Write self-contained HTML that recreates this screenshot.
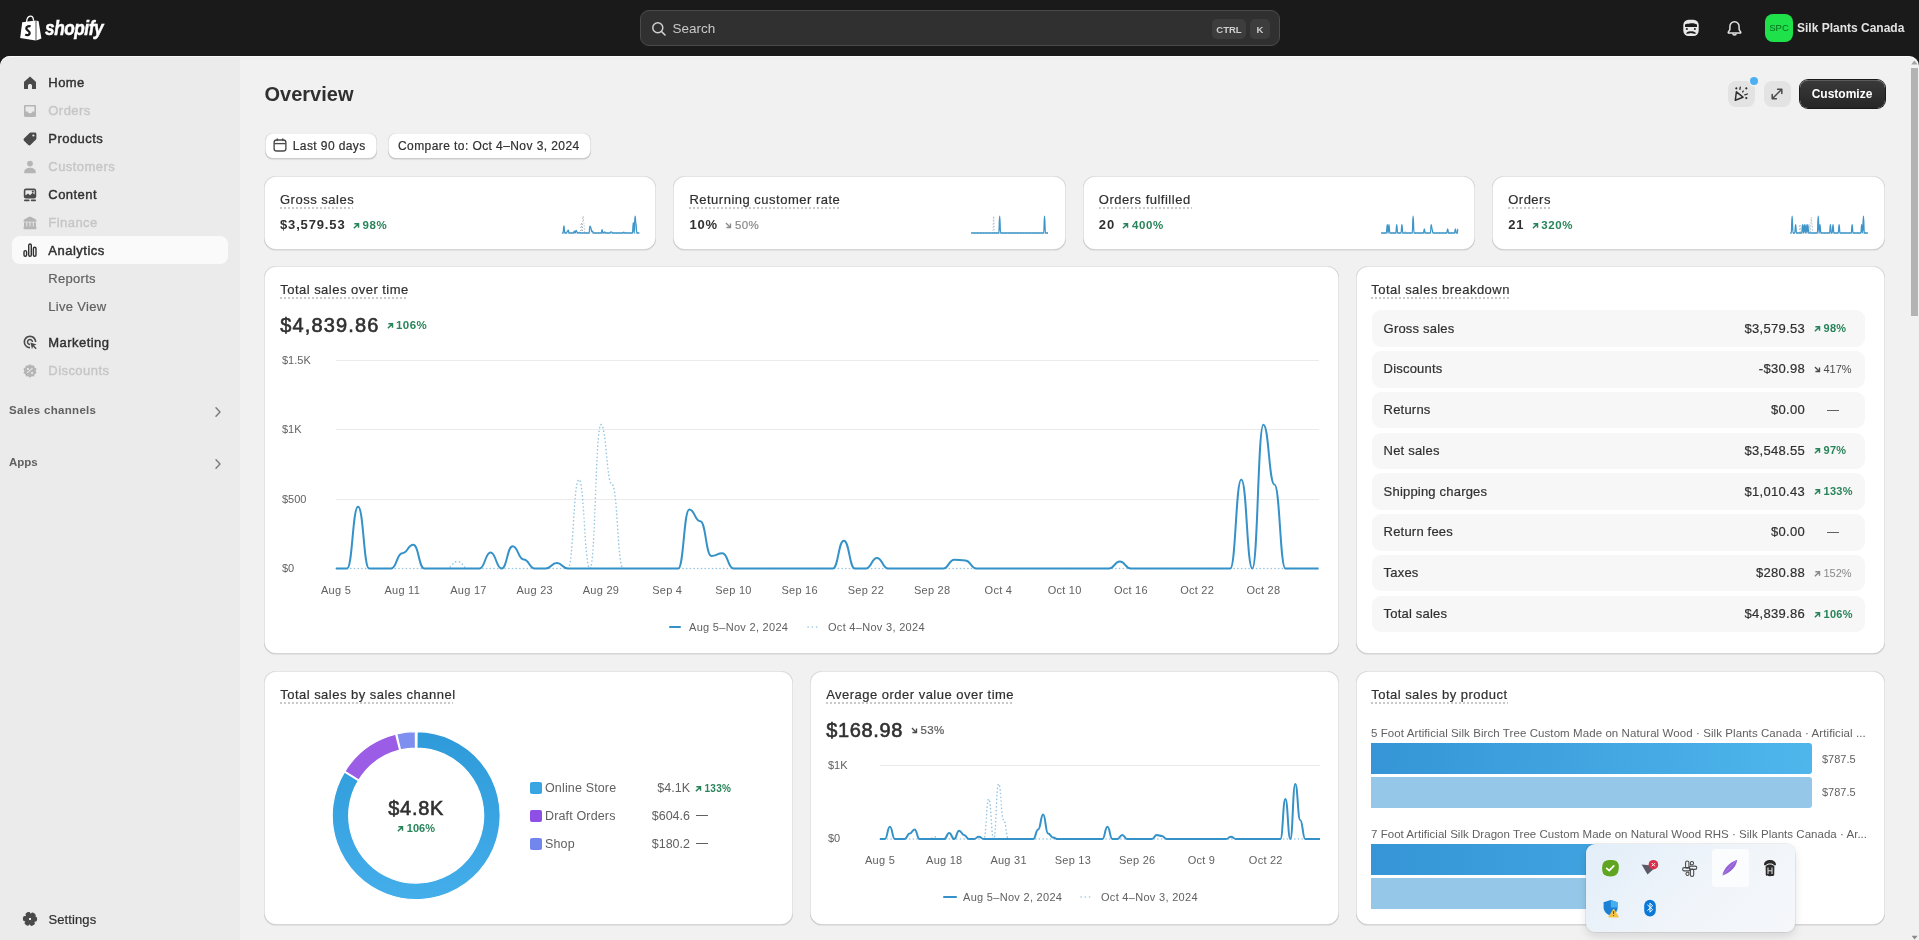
<!DOCTYPE html><html><head><meta charset="utf-8"><style>
*{margin:0;padding:0;box-sizing:border-box;}
html,body{width:1919px;height:940px;overflow:hidden;background:#1a1a1a;font-family:"Liberation Sans",sans-serif;-webkit-font-smoothing:antialiased;}
.md{-webkit-text-stroke:0.2px currentColor;}
.dots{position:absolute;height:1.5px;background:repeating-linear-gradient(90deg,#c9c9c9 0 2px,transparent 2px 4px);}
</style></head><body><div id="root" style="position:absolute;left:0;top:0;width:1919px;height:940px;overflow:hidden;will-change:transform;">
<div style="position:absolute;left:0.00px;top:0.00px;width:1919.00px;height:56.00px;background:#1a1a1a;"></div>
<svg style="position:absolute;left:19px;top:15px" width="24" height="26" viewBox="0 0 24 26">
<path d="M3.2 7.2 L16.6 5.4 L16.6 25.6 L1.2 23 Z" fill="#fff"/>
<path d="M17.4 5.6 L19.6 6.2 L22.4 23.6 L17.4 25.6 Z" fill="#fff"/>
<path d="M7.6 7 C7.8 3.6 9.4 1.4 11.4 1.2 C13.4 1.1 14.4 2.8 14.6 5.8" fill="none" stroke="#fff" stroke-width="1.3"/>
<path d="M11.6 11.6 C10.4 10.9 7.2 11 7.3 13.4 C7.4 15.6 10.9 15.7 10.7 18.2 C10.5 20.4 7.9 20.6 6.3 19.4" fill="none" stroke="#1a1a1a" stroke-width="2.3"/>
</svg>
<div style="position:absolute;left:44.50px;top:18.07px;font-size:20px;line-height:1;white-space:nowrap;color:#fff;font-weight:700;font-style:italic;transform:scaleX(0.86);transform-origin:0 0;letter-spacing:-0.5px;-webkit-text-stroke:0.5px #fff;">shopify</div>
<div style="position:absolute;left:640.00px;top:10.00px;width:640.00px;height:36.00px;background:#303030;border:1px solid #4a4a4a;border-radius:9px;box-sizing:border-box;"></div>
<svg style="position:absolute;left:651px;top:21px" width="16" height="16" viewBox="0 0 16 16"><circle cx="6.8" cy="6.8" r="5" fill="none" stroke="#d0d0d0" stroke-width="1.5"/><path d="M10.5 10.5 L14 14" stroke="#d0d0d0" stroke-width="1.6" stroke-linecap="round"/></svg>
<div style="position:absolute;left:672.50px;top:21.57px;font-size:13.5px;line-height:1;white-space:nowrap;color:#c8c8c8;">Search</div>
<div style="position:absolute;left:1212.00px;top:19.00px;width:34.00px;height:20.00px;background:#3d3d3d;border-radius:5px;"></div>
<div style="position:absolute;left:1250.00px;top:19.00px;width:20.00px;height:20.00px;background:#3d3d3d;border-radius:5px;"></div>
<div style="position:absolute;left:1212.00px;width:34px;text-align:center;top:24.66px;font-size:9.5px;line-height:1;white-space:nowrap;color:#cfcfcf;font-weight:700;">CTRL</div>
<div style="position:absolute;left:1250.00px;width:20px;text-align:center;top:24.66px;font-size:9.5px;line-height:1;white-space:nowrap;color:#cfcfcf;font-weight:700;">K</div>
<svg style="position:absolute;left:0;top:0" width="1919" height="56">
<rect x="1683.3" y="19.8" width="15.4" height="16.2" rx="5.2" fill="#e8e8e8"/>
<path d="M1685 24.6 C1686.5 23.4 1688 24.2 1689.6 23.6 C1691.4 22.9 1694 23 1697 24.4 L1697 27 C1693 26.6 1689.5 27.4 1685 27 Z" fill="#1a1a1a"/>
<circle cx="1686.9" cy="29" r="1" fill="#1a1a1a"/><circle cx="1694.9" cy="29" r="1" fill="#1a1a1a"/>
<path d="M1685.8 33.6 C1687.5 31.4 1689.5 30.8 1691 31.4 C1692.5 30.8 1694.5 31.4 1696.4 33.6 C1694.5 33.9 1692.5 33.5 1691 33.1 C1689.5 33.5 1687.5 33.9 1685.8 33.6 Z" fill="#1a1a1a"/>
</svg>
<svg style="position:absolute;left:1726px;top:20px" width="17" height="17" viewBox="0 0 17 17">
<path d="M8.5 1.8 C5.6 1.8 3.9 4 3.9 6.8 L3.9 9.6 L2.3 12.2 C2.1 12.6 2.3 13 2.8 13 L14.2 13 C14.7 13 14.9 12.6 14.7 12.2 L13.1 9.6 L13.1 6.8 C13.1 4 11.4 1.8 8.5 1.8 Z" fill="none" stroke="#e3e3e3" stroke-width="1.5" stroke-linejoin="round"/>
<path d="M6.8 13.6 C6.8 15.6 10.2 15.6 10.2 13.6" fill="none" stroke="#e3e3e3" stroke-width="1.5"/>
</svg>
<div style="position:absolute;left:1765.00px;top:14.00px;width:28.00px;height:28.00px;background:#1fe24b;border-radius:8px;"></div>
<div style="position:absolute;left:1765.00px;width:28px;text-align:center;top:23.46px;font-size:9.5px;line-height:1;white-space:nowrap;color:#0a6b1f;">SPC</div>
<div style="position:absolute;left:1797.00px;top:22.04px;font-size:12px;line-height:1;white-space:nowrap;color:#e3e3e3;font-weight:700;">Silk Plants Canada</div>
<div style="position:absolute;left:0.00px;top:56.00px;width:1919.00px;height:884.00px;background:#f1f1f1;border-radius:10px 10px 0 0;overflow:hidden;"><div style="position:absolute;left:0;top:0;width:240px;height:884px;background:#ebebeb;"></div><div style="position:absolute;left:0;top:0;width:1919px;height:884px;border-radius:10px 10px 0 0;box-shadow:inset 0 1px 0 rgba(255,255,255,0.7);"></div></div>
<div style="position:absolute;left:12.00px;top:236.00px;width:216.00px;height:28.00px;background:#fafafa;border-radius:8px;"></div>
<svg style="position:absolute;left:22px;top:74.60000000000001px" width="16" height="16" viewBox="0 0 16 16" fill="#4a4a4a" stroke="#4a4a4a" stroke-width="0"><path d="M8 1.6 L13.6 6.4 C13.9 6.7 14 7 14 7.4 L14 13.4 C14 13.8 13.7 14 13.4 14 L10 14 L10 10.6 C10 9.7 9.1 9 8 9 C6.9 9 6 9.7 6 10.6 L6 14 L2.6 14 C2.3 14 2 13.8 2 13.4 L2 7.4 C2 7 2.1 6.7 2.4 6.4 Z"/></svg>
<div style="position:absolute;left:48.30px;top:76.20px;font-size:13px;line-height:1;white-space:nowrap;color:#303030;-webkit-text-stroke:0.4px #303030;letter-spacing:0.45px;">Home</div>
<svg style="position:absolute;left:22px;top:102.60000000000001px" width="16" height="16" viewBox="0 0 16 16" fill="#b5b5b5" stroke="#b5b5b5" stroke-width="0"><path d="M3.2 2 L12.8 2 C13.5 2 14 2.5 14 3.2 L14 12.8 C14 13.5 13.5 14 12.8 14 L3.2 14 C2.5 14 2 13.5 2 12.8 L2 3.2 C2 2.5 2.5 2 3.2 2 Z M3.6 3.6 L3.6 8.4 L5.6 8.4 C6 9.6 6.9 10.2 8 10.2 C9.1 10.2 10 9.6 10.4 8.4 L12.4 8.4 L12.4 3.6 Z" fill-rule="evenodd"/></svg>
<div style="position:absolute;left:48.30px;top:104.20px;font-size:13px;line-height:1;white-space:nowrap;color:#c6c6c6;-webkit-text-stroke:0.4px #c6c6c6;letter-spacing:0.45px;">Orders</div>
<svg style="position:absolute;left:22px;top:130.6px" width="16" height="16" viewBox="0 0 16 16" fill="#4a4a4a" stroke="#4a4a4a" stroke-width="0"><path d="M8.6 1.6 L13 1.6 C13.8 1.6 14.4 2.2 14.4 3 L14.4 7.4 C14.4 7.8 14.2 8.2 14 8.4 L8.4 14 C7.8 14.6 6.9 14.6 6.3 14 L2 9.7 C1.4 9.1 1.4 8.2 2 7.6 L7.6 2 C7.8 1.8 8.2 1.6 8.6 1.6 Z M11.4 3.4 A1.1 1.1 0 1 0 11.4 5.6 A1.1 1.1 0 1 0 11.4 3.4 Z" fill-rule="evenodd"/></svg>
<div style="position:absolute;left:48.30px;top:132.20px;font-size:13px;line-height:1;white-space:nowrap;color:#303030;-webkit-text-stroke:0.4px #303030;letter-spacing:0.45px;">Products</div>
<svg style="position:absolute;left:22px;top:158.6px" width="16" height="16" viewBox="0 0 16 16" fill="#b5b5b5" stroke="#b5b5b5" stroke-width="0"><circle cx="8" cy="4.6" r="2.9"/><path d="M2.2 13.2 C2.2 10.4 4.6 8.8 8 8.8 C11.4 8.8 13.8 10.4 13.8 13.2 C13.8 13.8 13.4 14.2 12.8 14.2 L3.2 14.2 C2.6 14.2 2.2 13.8 2.2 13.2 Z"/></svg>
<div style="position:absolute;left:48.30px;top:160.20px;font-size:13px;line-height:1;white-space:nowrap;color:#c6c6c6;-webkit-text-stroke:0.4px #c6c6c6;letter-spacing:0.45px;">Customers</div>
<svg style="position:absolute;left:22px;top:186.6px" width="16" height="16" viewBox="0 0 16 16" fill="#4a4a4a" stroke="#4a4a4a" stroke-width="0"><rect x="1.8" y="1.6" width="12.4" height="9.8" rx="2.2"/><path d="M3.4 3.2 L12.6 3.2 L12.6 7.4 L10.6 5.8 L8 8.2 L6 6.4 L3.4 8.4 Z" fill="#ebebeb"/><circle cx="10.8" cy="4.6" r="1.05"/><rect x="2" y="12.6" width="5.6" height="1.6" rx=".8"/><rect x="8.8" y="12.6" width="5.2" height="1.6" rx=".8"/></svg>
<div style="position:absolute;left:48.30px;top:188.20px;font-size:13px;line-height:1;white-space:nowrap;color:#303030;-webkit-text-stroke:0.4px #303030;letter-spacing:0.45px;">Content</div>
<svg style="position:absolute;left:22px;top:214.6px" width="16" height="16" viewBox="0 0 16 16" fill="#b5b5b5" stroke="#b5b5b5" stroke-width="0"><path d="M8 1.4 C10.5 2.4 12.8 3.6 14.4 5 L14.4 6.8 L1.6 6.8 L1.6 5 C3.2 3.6 5.5 2.4 8 1.4 Z"/><rect x="2" y="7.4" width="2.3" height="4.2"/><rect x="5.2" y="7.4" width="2.3" height="4.2"/><rect x="8.5" y="7.4" width="2.3" height="4.2"/><rect x="11.7" y="7.4" width="2.3" height="4.2"/><rect x="1.6" y="11.2" width="12.8" height="3" rx=".8"/></svg>
<div style="position:absolute;left:48.30px;top:216.20px;font-size:13px;line-height:1;white-space:nowrap;color:#c6c6c6;-webkit-text-stroke:0.4px #c6c6c6;letter-spacing:0.45px;">Finance</div>
<svg style="position:absolute;left:22px;top:242.4px" width="16" height="16" viewBox="0 0 16 16" fill="#303030" stroke="#303030" stroke-width="0"><g fill="none" stroke-width="1.4"><rect x="2" y="8.6" width="2.6" height="5.6" rx="1.3"/><rect x="6.7" y="2" width="2.6" height="12.2" rx="1.3"/><rect x="11.4" y="5.2" width="2.6" height="9" rx="1.3"/></g></svg>
<div style="position:absolute;left:48.30px;top:244.20px;font-size:13px;line-height:1;white-space:nowrap;color:#303030;-webkit-text-stroke:0.45px #303030;letter-spacing:0.5px;">Analytics</div>
<div class="md" style="position:absolute;left:48.30px;top:272.20px;font-size:13px;line-height:1;white-space:nowrap;color:#616161;letter-spacing:0.3px;">Reports</div>
<div class="md" style="position:absolute;left:48.30px;top:300.20px;font-size:13px;line-height:1;white-space:nowrap;color:#616161;letter-spacing:0.3px;">Live View</div>
<svg style="position:absolute;left:22px;top:334px" width="16" height="16" viewBox="0 0 16 16" fill="#4a4a4a" stroke="#4a4a4a" stroke-width="0"><path d="M8 1.6 C11.5 1.6 14.4 4.4 14.4 8 L12.8 8 C12.8 5.3 10.7 3.2 8 3.2 C5.3 3.2 3.2 5.3 3.2 8 C3.2 10.7 5.3 12.8 8 12.8 L8 14.4 C4.5 14.4 1.6 11.5 1.6 8 C1.6 4.4 4.5 1.6 8 1.6 Z"/><path d="M8 4.8 C9.8 4.8 11.2 6.2 11.2 8 L9.7 8 C9.7 7 9 6.3 8 6.3 C7 6.3 6.3 7 6.3 8 C6.3 9 7 9.7 8 9.7 L8 11.2 C6.2 11.2 4.8 9.8 4.8 8 C4.8 6.2 6.2 4.8 8 4.8 Z"/><path d="M8.4 8.4 L14.6 10.6 L12 11.6 L14.6 14.2 L13.6 15.2 L11 12.6 L10 15.2 Z"/></svg>
<div style="position:absolute;left:48.30px;top:336.20px;font-size:13px;line-height:1;white-space:nowrap;color:#303030;-webkit-text-stroke:0.4px #303030;letter-spacing:0.45px;">Marketing</div>
<svg style="position:absolute;left:22px;top:363px" width="16" height="16" viewBox="0 0 16 16" fill="#b5b5b5" stroke="#b5b5b5" stroke-width="0"><path d="M8 1.2 L9.8 2.6 L12.1 2.4 L12.6 4.6 L14.6 5.8 L13.7 7.9 L14.6 10 L12.6 11.3 L12.1 13.5 L9.8 13.3 L8 14.8 L6.2 13.3 L3.9 13.5 L3.4 11.3 L1.4 10 L2.3 7.9 L1.4 5.8 L3.4 4.6 L3.9 2.4 L6.2 2.6 Z M5.4 10.2 L10.8 5.4 L10.2 4.8 L4.8 9.6 Z M5.9 4.9 A1.1 1.1 0 1 0 5.9 7.1 A1.1 1.1 0 1 0 5.9 4.9 Z M10.1 8.9 A1.1 1.1 0 1 0 10.1 11.1 A1.1 1.1 0 1 0 10.1 8.9 Z" fill-rule="evenodd"/></svg>
<div style="position:absolute;left:48.30px;top:364.20px;font-size:13px;line-height:1;white-space:nowrap;color:#c6c6c6;-webkit-text-stroke:0.4px #c6c6c6;letter-spacing:0.45px;">Discounts</div>
<div style="position:absolute;left:9.00px;top:404.87px;font-size:11.5px;line-height:1;white-space:nowrap;color:#616161;font-weight:700;letter-spacing:0.3px;">Sales channels</div>
<div style="position:absolute;left:9.00px;top:456.87px;font-size:11.5px;line-height:1;white-space:nowrap;color:#616161;font-weight:700;">Apps</div>
<svg style="position:absolute;left:213px;top:406px" width="10" height="12" viewBox="0 0 10 12"><path d="M3 1.8 L7 6 L3 10.2" fill="none" stroke="#7a7a7a" stroke-width="1.4" stroke-linecap="round" stroke-linejoin="round"/></svg>
<svg style="position:absolute;left:213px;top:458px" width="10" height="12" viewBox="0 0 10 12"><path d="M3 1.8 L7 6 L3 10.2" fill="none" stroke="#7a7a7a" stroke-width="1.4" stroke-linecap="round" stroke-linejoin="round"/></svg>
<svg style="position:absolute;left:22px;top:911px" width="16" height="16" viewBox="0 0 16 16" fill="#4a4a4a" stroke="#4a4a4a"><circle cx="8" cy="8" r="5"/><circle cx="8" cy="8" r="5.3" fill="none" stroke-width="3.6" stroke-dasharray="1.6 3.95" stroke-linecap="round" transform="rotate(-8 8 8)"/><circle cx="8" cy="8" r="1.7" fill="#ebebeb"/></svg>
<div class="md" style="position:absolute;left:48.50px;top:913.00px;font-size:13px;line-height:1;white-space:nowrap;color:#303030;letter-spacing:0.1px;">Settings</div>
<div style="position:absolute;left:264.50px;top:83.87px;font-size:20px;line-height:1;white-space:nowrap;color:#303030;font-weight:700;">Overview</div>
<div style="position:absolute;left:1727.50px;top:80.50px;width:27.00px;height:26.50px;background:#e3e3e3;border-radius:8px;"></div>
<svg style="position:absolute;left:0;top:0" width="1919" height="120">
<path d="M1736.4 91.8 L1743 97.2 L1735.3 100.2 Z" fill="none" stroke="#303030" stroke-width="1.5" stroke-linejoin="round"/>
<path d="M1736.3 86.9 L1737.6 88.3 L1736.3 89.7 L1735 88.3 Z" fill="#303030"/>
<path d="M1746.3 86.9 L1747.6 88.3 L1746.3 89.7 L1745 88.3 Z" fill="#303030"/>
<path d="M1740.3 87.2 L1739.9 89.3" stroke="#303030" stroke-width="1.3" stroke-linecap="round"/>
<path d="M1743.2 91 L1742.7 92" stroke="#303030" stroke-width="1.3" stroke-linecap="round"/>
<path d="M1744.8 94.8 L1747.4 94" stroke="#303030" stroke-width="1.3" stroke-linecap="round"/>
<circle cx="1746.3" cy="98.1" r="1.1" fill="#303030"/>
</svg>
<div style="position:absolute;left:1750.00px;top:77.00px;width:8.40px;height:8.40px;background:#4cb0f2;border-radius:50%;box-shadow:0 0 0 1.5px #f1f1f1;"></div>
<div style="position:absolute;left:1763.50px;top:80.50px;width:27.00px;height:26.50px;background:#e3e3e3;border-radius:8px;"></div>
<svg style="position:absolute;left:1769px;top:86px" width="16" height="16" viewBox="0 0 16 16">
<path d="M3.5 12.5 L12.5 3.5 M8.6 3.2 L12.8 3.2 L12.8 7.4 M3.2 8.6 L3.2 12.8 L7.4 12.8" fill="none" stroke="#4a4a4a" stroke-width="1.5" stroke-linecap="round" stroke-linejoin="round"/>
</svg>
<div style="position:absolute;left:1799.50px;top:80.00px;width:85.00px;height:27.50px;background:linear-gradient(#3a3a3a,#262626);border-radius:8px;box-shadow:0 0 0 1px #1a1a1a, inset 0 1px 0 rgba(255,255,255,0.18);"></div>
<div style="position:absolute;left:1802.00px;width:80px;text-align:center;top:88.04px;font-size:12px;line-height:1;white-space:nowrap;color:#fff;font-weight:700;">Customize</div>
<div style="position:absolute;left:264.50px;top:132.50px;width:112.50px;height:26.00px;background:#fff;border-radius:8px;box-shadow:inset 1px 0 0 rgba(0,0,0,.1),inset -1px 0 0 rgba(0,0,0,.1),inset 0 -1px 0 rgba(0,0,0,.2),inset 0 1px 0 rgba(0,0,0,.06),0 1px 1px rgba(0,0,0,.08);"></div>
<svg style="position:absolute;left:272px;top:137px" width="16" height="16" viewBox="0 0 16 16">
<rect x="2.1" y="3" width="11.8" height="11" rx="2.6" fill="none" stroke="#4a4a4a" stroke-width="1.35"/>
<path d="M2.3 6.6 L13.7 6.6" stroke="#4a4a4a" stroke-width="1.35"/>
<path d="M5.2 1.8 L5.2 3.6 M10.8 1.8 L10.8 3.6" stroke="#4a4a4a" stroke-width="1.35" stroke-linecap="round"/>
</svg>
<div class="md" style="position:absolute;left:292.80px;top:140.24px;font-size:12px;line-height:1;white-space:nowrap;color:#303030;letter-spacing:0.4px;">Last 90 days</div>
<div style="position:absolute;left:387.50px;top:132.50px;width:203.50px;height:26.00px;background:#fff;border-radius:8px;box-shadow:inset 1px 0 0 rgba(0,0,0,.1),inset -1px 0 0 rgba(0,0,0,.1),inset 0 -1px 0 rgba(0,0,0,.2),inset 0 1px 0 rgba(0,0,0,.06),0 1px 1px rgba(0,0,0,.08);"></div>
<div class="md" style="position:absolute;left:398.00px;top:140.24px;font-size:12px;line-height:1;white-space:nowrap;color:#303030;letter-spacing:0.42px;">Compare to: Oct 4–Nov 3, 2024</div>
<div style="position:absolute;left:264.00px;top:176.20px;width:392.40px;height:73.60px;background:#fff;border-radius:12px;box-shadow:inset 1px 0 0 rgba(0,0,0,.11),inset -1px 0 0 rgba(0,0,0,.11),inset 0 -1px 0 rgba(0,0,0,.16),inset 0 1px 0 rgba(204,204,204,.5),0 1px 0 rgba(26,26,26,.07);"></div>
<div class="md" style="position:absolute;left:280.00px;top:193.00px;font-size:13px;line-height:1;white-space:nowrap;color:#303030;letter-spacing:0.5px;">Gross sales</div>
<div class="dots" style="left:280.0px;top:207.3px;width:73px"></div>
<div style="position:absolute;left:280px;top:217.9955px;font-size:13px;line-height:1;white-space:nowrap;color:#303030;font-weight:700;letter-spacing:0.85px;">$3,579.53<span style="display:inline-block;width:7.5px"></span><span style="font-size:11.5px;color:#29845a;font-weight:700;letter-spacing:0.6px"><svg width="7" height="7" viewBox="0 0 8 8" style="display:inline-block;vertical-align:0px;margin-right:2.5px"><path d="M1.6 6.6 L6 2.2 M2.4 1.9 L6.3 1.9 L6.3 5.8" fill="none" stroke="#29845a" stroke-width="1.7" stroke-linecap="square"/></svg>98%</span></div>
<div style="position:absolute;left:673.40px;top:176.20px;width:392.40px;height:73.60px;background:#fff;border-radius:12px;box-shadow:inset 1px 0 0 rgba(0,0,0,.11),inset -1px 0 0 rgba(0,0,0,.11),inset 0 -1px 0 rgba(0,0,0,.16),inset 0 1px 0 rgba(204,204,204,.5),0 1px 0 rgba(26,26,26,.07);"></div>
<div class="md" style="position:absolute;left:689.40px;top:193.00px;font-size:13px;line-height:1;white-space:nowrap;color:#303030;letter-spacing:0.5px;">Returning customer rate</div>
<div class="dots" style="left:689.4px;top:207.3px;width:152px"></div>
<div style="position:absolute;left:689.4px;top:217.9955px;font-size:13px;line-height:1;white-space:nowrap;color:#303030;font-weight:700;letter-spacing:0.85px;">10%<span style="display:inline-block;width:7.5px"></span><span class="md" style="font-size:11.5px;color:#8a8a8a;font-weight:400;letter-spacing:0.4px"><svg width="7" height="7" viewBox="0 0 8 8" style="display:inline-block;vertical-align:0px;margin-right:2.5px"><path d="M1.6 1.6 L6 6 M6.3 2.4 L6.3 6.3 L2.4 6.3" fill="none" stroke="#8a8a8a" stroke-width="1.5" stroke-linecap="square"/></svg>50%</span></div>
<div style="position:absolute;left:1082.80px;top:176.20px;width:392.40px;height:73.60px;background:#fff;border-radius:12px;box-shadow:inset 1px 0 0 rgba(0,0,0,.11),inset -1px 0 0 rgba(0,0,0,.11),inset 0 -1px 0 rgba(0,0,0,.16),inset 0 1px 0 rgba(204,204,204,.5),0 1px 0 rgba(26,26,26,.07);"></div>
<div class="md" style="position:absolute;left:1098.80px;top:193.00px;font-size:13px;line-height:1;white-space:nowrap;color:#303030;letter-spacing:0.5px;">Orders fulfilled</div>
<div class="dots" style="left:1098.8px;top:207.3px;width:93px"></div>
<div style="position:absolute;left:1098.8px;top:217.9955px;font-size:13px;line-height:1;white-space:nowrap;color:#303030;font-weight:700;letter-spacing:0.85px;">20<span style="display:inline-block;width:7.5px"></span><span style="font-size:11.5px;color:#29845a;font-weight:700;letter-spacing:0.6px"><svg width="7" height="7" viewBox="0 0 8 8" style="display:inline-block;vertical-align:0px;margin-right:2.5px"><path d="M1.6 6.6 L6 2.2 M2.4 1.9 L6.3 1.9 L6.3 5.8" fill="none" stroke="#29845a" stroke-width="1.7" stroke-linecap="square"/></svg>400%</span></div>
<div style="position:absolute;left:1492.20px;top:176.20px;width:392.40px;height:73.60px;background:#fff;border-radius:12px;box-shadow:inset 1px 0 0 rgba(0,0,0,.11),inset -1px 0 0 rgba(0,0,0,.11),inset 0 -1px 0 rgba(0,0,0,.16),inset 0 1px 0 rgba(204,204,204,.5),0 1px 0 rgba(26,26,26,.07);"></div>
<div class="md" style="position:absolute;left:1508.20px;top:193.00px;font-size:13px;line-height:1;white-space:nowrap;color:#303030;letter-spacing:0.5px;">Orders</div>
<div class="dots" style="left:1508.2px;top:207.3px;width:43px"></div>
<div style="position:absolute;left:1508.2px;top:217.9955px;font-size:13px;line-height:1;white-space:nowrap;color:#303030;font-weight:700;letter-spacing:0.85px;">21<span style="display:inline-block;width:7.5px"></span><span style="font-size:11.5px;color:#29845a;font-weight:700;letter-spacing:0.6px"><svg width="7" height="7" viewBox="0 0 8 8" style="display:inline-block;vertical-align:0px;margin-right:2.5px"><path d="M1.6 6.6 L6 2.2 M2.4 1.9 L6.3 1.9 L6.3 5.8" fill="none" stroke="#29845a" stroke-width="1.7" stroke-linecap="square"/></svg>320%</span></div>
<div style="position:absolute;left:264.00px;top:266.30px;width:1074.70px;height:388.20px;background:#fff;border-radius:12px;box-shadow:inset 1px 0 0 rgba(0,0,0,.11),inset -1px 0 0 rgba(0,0,0,.11),inset 0 -1px 0 rgba(0,0,0,.16),inset 0 1px 0 rgba(204,204,204,.5),0 1px 0 rgba(26,26,26,.07);"></div>
<div class="md" style="position:absolute;left:280.20px;top:283.00px;font-size:13px;line-height:1;white-space:nowrap;color:#303030;letter-spacing:0.48px;">Total sales over time</div>
<div class="dots" style="left:280.2px;top:297.2px;width:128.0px"></div>
<div style="position:absolute;left:280.20px;top:315.07px;font-size:20px;line-height:1;white-space:nowrap;color:#303030;-webkit-text-stroke:0.6px #303030;letter-spacing:1.15px;">$4,839.86</div>
<div style="position:absolute;left:386.50px;top:320.47px;font-size:11.5px;line-height:1;white-space:nowrap;color:#29845a;font-weight:700;letter-spacing:0.45px;"><svg width="7" height="7" viewBox="0 0 8 8" style="display:inline-block;vertical-align:0px;margin-right:2.5px"><path d="M1.6 6.6 L6 2.2 M2.4 1.9 L6.3 1.9 L6.3 5.8" fill="none" stroke="#29845a" stroke-width="1.7" stroke-linecap="square"/></svg>106%</div>
<div style="position:absolute;left:336.00px;top:359.50px;width:983.00px;height:1.00px;background:#ebebeb;"></div>
<div style="position:absolute;left:282.00px;top:354.69px;font-size:11px;line-height:1;white-space:nowrap;color:#616161;">$1.5K</div>
<div style="position:absolute;left:336.00px;top:429.00px;width:983.00px;height:1.00px;background:#ebebeb;"></div>
<div style="position:absolute;left:282.00px;top:424.19px;font-size:11px;line-height:1;white-space:nowrap;color:#616161;">$1K</div>
<div style="position:absolute;left:336.00px;top:498.50px;width:983.00px;height:1.00px;background:#ebebeb;"></div>
<div style="position:absolute;left:282.00px;top:493.69px;font-size:11px;line-height:1;white-space:nowrap;color:#616161;">$500</div>
<div style="position:absolute;left:282.00px;top:563.19px;font-size:11px;line-height:1;white-space:nowrap;color:#616161;">$0</div>
<div style="position:absolute;left:306.00px;width:60px;text-align:center;top:584.69px;font-size:11px;line-height:1;white-space:nowrap;color:#616161;letter-spacing:0.25px;">Aug 5</div>
<div style="position:absolute;left:372.24px;width:60px;text-align:center;top:584.69px;font-size:11px;line-height:1;white-space:nowrap;color:#616161;letter-spacing:0.25px;">Aug 11</div>
<div style="position:absolute;left:438.48px;width:60px;text-align:center;top:584.69px;font-size:11px;line-height:1;white-space:nowrap;color:#616161;letter-spacing:0.25px;">Aug 17</div>
<div style="position:absolute;left:504.72px;width:60px;text-align:center;top:584.69px;font-size:11px;line-height:1;white-space:nowrap;color:#616161;letter-spacing:0.25px;">Aug 23</div>
<div style="position:absolute;left:570.96px;width:60px;text-align:center;top:584.69px;font-size:11px;line-height:1;white-space:nowrap;color:#616161;letter-spacing:0.25px;">Aug 29</div>
<div style="position:absolute;left:637.20px;width:60px;text-align:center;top:584.69px;font-size:11px;line-height:1;white-space:nowrap;color:#616161;letter-spacing:0.25px;">Sep 4</div>
<div style="position:absolute;left:703.44px;width:60px;text-align:center;top:584.69px;font-size:11px;line-height:1;white-space:nowrap;color:#616161;letter-spacing:0.25px;">Sep 10</div>
<div style="position:absolute;left:769.68px;width:60px;text-align:center;top:584.69px;font-size:11px;line-height:1;white-space:nowrap;color:#616161;letter-spacing:0.25px;">Sep 16</div>
<div style="position:absolute;left:835.92px;width:60px;text-align:center;top:584.69px;font-size:11px;line-height:1;white-space:nowrap;color:#616161;letter-spacing:0.25px;">Sep 22</div>
<div style="position:absolute;left:902.16px;width:60px;text-align:center;top:584.69px;font-size:11px;line-height:1;white-space:nowrap;color:#616161;letter-spacing:0.25px;">Sep 28</div>
<div style="position:absolute;left:968.40px;width:60px;text-align:center;top:584.69px;font-size:11px;line-height:1;white-space:nowrap;color:#616161;letter-spacing:0.25px;">Oct 4</div>
<div style="position:absolute;left:1034.64px;width:60px;text-align:center;top:584.69px;font-size:11px;line-height:1;white-space:nowrap;color:#616161;letter-spacing:0.25px;">Oct 10</div>
<div style="position:absolute;left:1100.88px;width:60px;text-align:center;top:584.69px;font-size:11px;line-height:1;white-space:nowrap;color:#616161;letter-spacing:0.25px;">Oct 16</div>
<div style="position:absolute;left:1167.12px;width:60px;text-align:center;top:584.69px;font-size:11px;line-height:1;white-space:nowrap;color:#616161;letter-spacing:0.25px;">Oct 22</div>
<div style="position:absolute;left:1233.36px;width:60px;text-align:center;top:584.69px;font-size:11px;line-height:1;white-space:nowrap;color:#616161;letter-spacing:0.25px;">Oct 28</div>
<svg style="position:absolute;left:0;top:0" width="1919" height="940"><path d="M336.00,568.50L347.04,568.50L358.08,568.50L369.12,568.50L380.16,568.50L391.20,568.50L402.24,568.50L413.28,568.50L424.32,568.50L435.36,568.50L446.40,568.50C451.92,568.50 451.92,561.55 457.44,561.55C462.97,561.55 462.97,568.50 468.49,568.50L479.53,568.50L490.57,568.50L501.61,568.50L512.65,568.50L523.69,568.50L534.73,568.50L545.77,568.50L556.81,568.50L567.85,568.50C573.37,568.50 573.37,479.54 578.89,479.54C584.41,479.54 584.41,568.50 589.93,568.50C595.45,568.50 595.45,424.63 600.97,424.63C606.49,424.63 606.49,484.40 612.01,484.40C617.53,484.40 617.53,568.50 623.05,568.50L634.09,568.50L645.13,568.50L656.17,568.50L667.21,568.50L678.25,568.50L689.29,568.50L700.33,568.50L711.38,568.50L722.42,568.50L733.46,568.50L744.50,568.50L755.54,568.50L766.58,568.50L777.62,568.50L788.66,568.50L799.70,568.50L810.74,568.50L821.78,568.50L832.82,568.50L843.86,568.50L854.90,568.50L865.94,568.50L876.98,568.50L888.02,568.50L899.06,568.50L910.10,568.50L921.14,568.50L932.18,568.50L943.22,568.50L954.27,568.50L965.31,568.50L976.35,568.50L987.39,568.50L998.43,568.50L1009.47,568.50L1020.51,568.50L1031.55,568.50L1042.59,568.50L1053.63,568.50L1064.67,568.50L1075.71,568.50L1086.75,568.50L1097.79,568.50L1108.83,568.50L1119.87,568.50L1130.91,568.50L1141.95,568.50L1152.99,568.50L1164.03,568.50L1175.07,568.50L1186.11,568.50L1197.16,568.50L1208.20,568.50L1219.24,568.50L1230.28,568.50L1241.32,568.50L1252.36,568.50L1263.40,568.50L1274.44,568.50L1285.48,568.50L1296.52,568.50L1307.56,568.50L1318.60,568.50" fill="none" stroke="#96c6e3" stroke-width="1.6" stroke-dasharray="0.1 3.6" stroke-linecap="round"/><path d="M336.00,568.50L347.04,568.50C352.56,568.50 352.56,506.64 358.08,506.64C363.60,506.64 363.60,568.50 369.12,568.50L380.16,568.50L391.20,568.50C396.72,568.50 396.72,553.21 402.24,553.21C407.76,553.21 407.76,544.87 413.28,544.87C418.80,544.87 418.80,568.50 424.32,568.50L435.36,568.50L446.40,568.50L457.44,568.50L468.49,568.50L479.53,568.50C485.05,568.50 485.05,552.51 490.57,552.51C496.09,552.51 496.09,568.50 501.61,568.50C507.13,568.50 507.13,546.26 512.65,546.26C518.17,546.26 518.17,559.47 523.69,559.47C529.21,559.47 529.21,568.50 534.73,568.50L545.77,568.50C551.29,568.50 551.29,562.94 556.81,562.94C562.33,562.94 562.33,568.50 567.85,568.50L578.89,568.50L589.93,568.50L600.97,568.50L612.01,568.50L623.05,568.50L634.09,568.50L645.13,568.50L656.17,568.50L667.21,568.50L678.25,568.50C683.77,568.50 683.77,509.43 689.29,509.43C694.81,509.43 694.81,521.24 700.33,521.24C705.86,521.24 705.86,555.99 711.38,555.99C716.90,555.99 716.90,553.21 722.42,553.21C727.94,553.21 727.94,568.50 733.46,568.50L744.50,568.50L755.54,568.50L766.58,568.50L777.62,568.50L788.66,568.50L799.70,568.50L810.74,568.50L821.78,568.50L832.82,568.50C838.34,568.50 838.34,540.70 843.86,540.70C849.38,540.70 849.38,568.50 854.90,568.50L865.94,568.50C871.46,568.50 871.46,558.08 876.98,558.08C882.50,558.08 882.50,568.50 888.02,568.50L899.06,568.50L910.10,568.50L921.14,568.50L932.18,568.50L943.22,568.50C948.74,568.50 948.74,559.74 954.27,559.74C959.79,559.74 959.79,560.44 965.31,560.44C970.83,560.44 970.83,568.50 976.35,568.50L987.39,568.50L998.43,568.50L1009.47,568.50L1020.51,568.50L1031.55,568.50L1042.59,568.50L1053.63,568.50L1064.67,568.50L1075.71,568.50L1086.75,568.50L1097.79,568.50L1108.83,568.50C1114.35,568.50 1114.35,561.55 1119.87,561.55C1125.39,561.55 1125.39,568.50 1130.91,568.50L1141.95,568.50L1152.99,568.50L1164.03,568.50L1175.07,568.50L1186.11,568.50L1197.16,568.50L1208.20,568.50L1219.24,568.50L1230.28,568.50C1235.80,568.50 1235.80,479.54 1241.32,479.54C1246.84,479.54 1246.84,568.50 1252.36,568.50C1257.88,568.50 1257.88,424.63 1263.40,424.63C1268.92,424.63 1268.92,484.40 1274.44,484.40C1279.96,484.40 1279.96,568.50 1285.48,568.50L1296.52,568.50L1307.56,568.50L1318.60,568.50" fill="none" stroke="#3592c8" stroke-width="2" stroke-linejoin="round"/></svg>
<div style="position:absolute;left:669.00px;top:626.00px;width:12.00px;height:2.00px;background:#3592c8;border-radius:1px;"></div>
<div style="position:absolute;left:689.00px;top:621.69px;font-size:11px;line-height:1;white-space:nowrap;color:#616161;letter-spacing:0.3px;">Aug 5–Nov 2, 2024</div>
<svg style="position:absolute;left:806px;top:624px" width="16" height="6"><path d="M2 3 L14 3" stroke="#96c6e3" stroke-width="1.6" stroke-dasharray="0.1 4.2" stroke-linecap="round"/></svg>
<div style="position:absolute;left:828.00px;top:621.69px;font-size:11px;line-height:1;white-space:nowrap;color:#616161;letter-spacing:0.3px;">Oct 4–Nov 3, 2024</div>
<div style="position:absolute;left:1355.70px;top:266.30px;width:528.90px;height:388.20px;background:#fff;border-radius:12px;box-shadow:inset 1px 0 0 rgba(0,0,0,.11),inset -1px 0 0 rgba(0,0,0,.11),inset 0 -1px 0 rgba(0,0,0,.16),inset 0 1px 0 rgba(204,204,204,.5),0 1px 0 rgba(26,26,26,.07);"></div>
<div class="md" style="position:absolute;left:1371.20px;top:283.00px;font-size:13px;line-height:1;white-space:nowrap;color:#303030;letter-spacing:0.48px;">Total sales breakdown</div>
<div class="dots" style="left:1371.2px;top:297.2px;width:139.0px"></div>
<div style="position:absolute;left:1371.50px;top:310.30px;width:493.50px;height:36.50px;background:#f7f7f7;border-radius:9px;"></div>
<div class="md" style="position:absolute;left:1383.60px;top:321.50px;font-size:13px;line-height:1;white-space:nowrap;color:#303030;letter-spacing:0.2px;">Gross sales</div>
<div class="md" style="position:absolute;left:1655.00px;width:150px;text-align:right;top:321.50px;font-size:13px;line-height:1;white-space:nowrap;color:#303030;letter-spacing:0.3px;">$3,579.53</div>
<div style="position:absolute;left:1814.00px;top:323.19px;font-size:11px;line-height:1;white-space:nowrap;color:#29845a;font-weight:700;letter-spacing:0.3px;"><svg width="7" height="7" viewBox="0 0 8 8" style="display:inline-block;vertical-align:0px;margin-right:2.5px"><path d="M1.6 6.6 L6 2.2 M2.4 1.9 L6.3 1.9 L6.3 5.8" fill="none" stroke="#29845a" stroke-width="1.7" stroke-linecap="square"/></svg>98%</div>
<div style="position:absolute;left:1371.50px;top:351.06px;width:493.50px;height:36.50px;background:#f7f7f7;border-radius:9px;"></div>
<div class="md" style="position:absolute;left:1383.60px;top:362.26px;font-size:13px;line-height:1;white-space:nowrap;color:#303030;letter-spacing:0.2px;">Discounts</div>
<div class="md" style="position:absolute;left:1655.00px;width:150px;text-align:right;top:362.26px;font-size:13px;line-height:1;white-space:nowrap;color:#303030;letter-spacing:0.3px;">-$30.98</div>
<div style="position:absolute;left:1814.00px;top:363.95px;font-size:11px;line-height:1;white-space:nowrap;color:#4a4a4a;"><svg width="7" height="7" viewBox="0 0 8 8" style="display:inline-block;vertical-align:0px;margin-right:2.5px"><path d="M1.6 1.6 L6 6 M6.3 2.4 L6.3 6.3 L2.4 6.3" fill="none" stroke="#4a4a4a" stroke-width="1.5" stroke-linecap="square"/></svg>417%</div>
<div style="position:absolute;left:1371.50px;top:391.82px;width:493.50px;height:36.50px;background:#f7f7f7;border-radius:9px;"></div>
<div class="md" style="position:absolute;left:1383.60px;top:403.02px;font-size:13px;line-height:1;white-space:nowrap;color:#303030;letter-spacing:0.2px;">Returns</div>
<div class="md" style="position:absolute;left:1655.00px;width:150px;text-align:right;top:403.02px;font-size:13px;line-height:1;white-space:nowrap;color:#303030;letter-spacing:0.3px;">$0.00</div>
<div style="position:absolute;left:1827.00px;top:409.52px;width:12.00px;height:1.20px;background:#616161;"></div>
<div style="position:absolute;left:1371.50px;top:432.58px;width:493.50px;height:36.50px;background:#f7f7f7;border-radius:9px;"></div>
<div class="md" style="position:absolute;left:1383.60px;top:443.78px;font-size:13px;line-height:1;white-space:nowrap;color:#303030;letter-spacing:0.2px;">Net sales</div>
<div class="md" style="position:absolute;left:1655.00px;width:150px;text-align:right;top:443.78px;font-size:13px;line-height:1;white-space:nowrap;color:#303030;letter-spacing:0.3px;">$3,548.55</div>
<div style="position:absolute;left:1814.00px;top:445.47px;font-size:11px;line-height:1;white-space:nowrap;color:#29845a;font-weight:700;letter-spacing:0.3px;"><svg width="7" height="7" viewBox="0 0 8 8" style="display:inline-block;vertical-align:0px;margin-right:2.5px"><path d="M1.6 6.6 L6 2.2 M2.4 1.9 L6.3 1.9 L6.3 5.8" fill="none" stroke="#29845a" stroke-width="1.7" stroke-linecap="square"/></svg>97%</div>
<div style="position:absolute;left:1371.50px;top:473.34px;width:493.50px;height:36.50px;background:#f7f7f7;border-radius:9px;"></div>
<div class="md" style="position:absolute;left:1383.60px;top:484.54px;font-size:13px;line-height:1;white-space:nowrap;color:#303030;letter-spacing:0.2px;">Shipping charges</div>
<div class="md" style="position:absolute;left:1655.00px;width:150px;text-align:right;top:484.54px;font-size:13px;line-height:1;white-space:nowrap;color:#303030;letter-spacing:0.3px;">$1,010.43</div>
<div style="position:absolute;left:1814.00px;top:486.23px;font-size:11px;line-height:1;white-space:nowrap;color:#29845a;font-weight:700;letter-spacing:0.3px;"><svg width="7" height="7" viewBox="0 0 8 8" style="display:inline-block;vertical-align:0px;margin-right:2.5px"><path d="M1.6 6.6 L6 2.2 M2.4 1.9 L6.3 1.9 L6.3 5.8" fill="none" stroke="#29845a" stroke-width="1.7" stroke-linecap="square"/></svg>133%</div>
<div style="position:absolute;left:1371.50px;top:514.10px;width:493.50px;height:36.50px;background:#f7f7f7;border-radius:9px;"></div>
<div class="md" style="position:absolute;left:1383.60px;top:525.30px;font-size:13px;line-height:1;white-space:nowrap;color:#303030;letter-spacing:0.2px;">Return fees</div>
<div class="md" style="position:absolute;left:1655.00px;width:150px;text-align:right;top:525.30px;font-size:13px;line-height:1;white-space:nowrap;color:#303030;letter-spacing:0.3px;">$0.00</div>
<div style="position:absolute;left:1827.00px;top:531.80px;width:12.00px;height:1.20px;background:#616161;"></div>
<div style="position:absolute;left:1371.50px;top:554.86px;width:493.50px;height:36.50px;background:#f7f7f7;border-radius:9px;"></div>
<div class="md" style="position:absolute;left:1383.60px;top:566.06px;font-size:13px;line-height:1;white-space:nowrap;color:#303030;letter-spacing:0.2px;">Taxes</div>
<div class="md" style="position:absolute;left:1655.00px;width:150px;text-align:right;top:566.06px;font-size:13px;line-height:1;white-space:nowrap;color:#303030;letter-spacing:0.3px;">$280.88</div>
<div style="position:absolute;left:1814.00px;top:567.75px;font-size:11px;line-height:1;white-space:nowrap;color:#8a8a8a;"><svg width="7" height="7" viewBox="0 0 8 8" style="display:inline-block;vertical-align:0px;margin-right:2.5px"><path d="M1.6 6.6 L6 2.2 M2.4 1.9 L6.3 1.9 L6.3 5.8" fill="none" stroke="#8a8a8a" stroke-width="1.7" stroke-linecap="square"/></svg>152%</div>
<div style="position:absolute;left:1371.50px;top:595.62px;width:493.50px;height:36.50px;background:#f7f7f7;border-radius:9px;"></div>
<div class="md" style="position:absolute;left:1383.60px;top:606.82px;font-size:13px;line-height:1;white-space:nowrap;color:#303030;letter-spacing:0.2px;">Total sales</div>
<div class="md" style="position:absolute;left:1655.00px;width:150px;text-align:right;top:606.82px;font-size:13px;line-height:1;white-space:nowrap;color:#303030;letter-spacing:0.3px;">$4,839.86</div>
<div style="position:absolute;left:1814.00px;top:608.51px;font-size:11px;line-height:1;white-space:nowrap;color:#29845a;font-weight:700;letter-spacing:0.3px;"><svg width="7" height="7" viewBox="0 0 8 8" style="display:inline-block;vertical-align:0px;margin-right:2.5px"><path d="M1.6 6.6 L6 2.2 M2.4 1.9 L6.3 1.9 L6.3 5.8" fill="none" stroke="#29845a" stroke-width="1.7" stroke-linecap="square"/></svg>106%</div>
<div style="position:absolute;left:264.00px;top:671.30px;width:528.80px;height:253.30px;background:#fff;border-radius:12px;box-shadow:inset 1px 0 0 rgba(0,0,0,.11),inset -1px 0 0 rgba(0,0,0,.11),inset 0 -1px 0 rgba(0,0,0,.16),inset 0 1px 0 rgba(204,204,204,.5),0 1px 0 rgba(26,26,26,.07);"></div>
<div class="md" style="position:absolute;left:280.20px;top:688.00px;font-size:13px;line-height:1;white-space:nowrap;color:#303030;letter-spacing:0.48px;">Total sales by sales channel</div>
<div class="dots" style="left:280.2px;top:702.2px;width:173.0px"></div>
<svg style="position:absolute;left:0;top:0" width="1919" height="940"><defs><linearGradient id="gOS" x1="0" y1="0" x2="0" y2="1"><stop offset="0" stop-color="#2f9ad9"/><stop offset="1" stop-color="#43aeea"/></linearGradient><linearGradient id="gDO" x1="0" y1="0" x2="1" y2="0"><stop offset="0" stop-color="#9c5ee8"/><stop offset="1" stop-color="#9a5be6"/></linearGradient></defs><path d="M417.08,731.60A84,84 0 1 1 344.35,772.09L358.46,780.63A67.5,67.5 0 1 0 416.91,748.10Z" fill="url(#gOS)" stroke="#fff" stroke-width="1.2"/><path d="M344.81,771.34A84,84 0 0 1 395.59,734.17L399.64,750.16A67.5,67.5 0 0 0 358.83,780.03Z" fill="#9b5de6" stroke="#fff" stroke-width="1.2"/><path d="M396.73,733.89A84,84 0 0 1 415.32,731.60L415.49,748.10A67.5,67.5 0 0 0 400.56,749.94Z" fill="#7f8ff0" stroke="#fff" stroke-width="1.2"/></svg>
<div style="position:absolute;left:366.20px;width:100px;text-align:center;top:798.07px;font-size:20px;line-height:1;white-space:nowrap;color:#303030;-webkit-text-stroke:0.6px #303030;letter-spacing:0.7px;">$4.8K</div>
<div style="position:absolute;left:366.20px;width:100px;text-align:center;top:823.49px;font-size:11px;line-height:1;white-space:nowrap;color:#29845a;font-weight:700;"><svg width="7" height="7" viewBox="0 0 8 8" style="display:inline-block;vertical-align:0px;margin-right:2.5px"><path d="M1.6 6.6 L6 2.2 M2.4 1.9 L6.3 1.9 L6.3 5.8" fill="none" stroke="#29845a" stroke-width="1.7" stroke-linecap="square"/></svg>106%</div>
<div style="position:absolute;left:530.00px;top:781.50px;width:12.00px;height:12.00px;background:#38a6e3;border-radius:2px;"></div>
<div style="position:absolute;left:545.00px;top:782.02px;font-size:12.5px;line-height:1;white-space:nowrap;color:#616161;letter-spacing:0.15px;">Online Store</div>
<div style="position:absolute;left:590.00px;width:100px;text-align:right;top:782.02px;font-size:12.5px;line-height:1;white-space:nowrap;color:#616161;">$4.1K</div>
<div style="position:absolute;left:695.00px;top:783.63px;font-size:10px;line-height:1;white-space:nowrap;color:#29845a;font-weight:700;letter-spacing:0.3px;"><svg width="7" height="7" viewBox="0 0 8 8" style="display:inline-block;vertical-align:0px;margin-right:2.5px"><path d="M1.6 6.6 L6 2.2 M2.4 1.9 L6.3 1.9 L6.3 5.8" fill="none" stroke="#29845a" stroke-width="1.7" stroke-linecap="square"/></svg>133%</div>
<div style="position:absolute;left:530.00px;top:809.50px;width:12.00px;height:12.00px;background:#8e4fe6;border-radius:2px;"></div>
<div style="position:absolute;left:545.00px;top:810.02px;font-size:12.5px;line-height:1;white-space:nowrap;color:#616161;letter-spacing:0.15px;">Draft Orders</div>
<div style="position:absolute;left:590.00px;width:100px;text-align:right;top:810.02px;font-size:12.5px;line-height:1;white-space:nowrap;color:#616161;">$604.6</div>
<div style="position:absolute;left:696.00px;top:814.90px;width:12.00px;height:1.40px;background:#616161;"></div>
<div style="position:absolute;left:530.00px;top:837.50px;width:12.00px;height:12.00px;background:#7386ee;border-radius:2px;"></div>
<div style="position:absolute;left:545.00px;top:838.02px;font-size:12.5px;line-height:1;white-space:nowrap;color:#616161;letter-spacing:0.15px;">Shop</div>
<div style="position:absolute;left:590.00px;width:100px;text-align:right;top:838.02px;font-size:12.5px;line-height:1;white-space:nowrap;color:#616161;">$180.2</div>
<div style="position:absolute;left:696.00px;top:842.90px;width:12.00px;height:1.40px;background:#616161;"></div>
<div style="position:absolute;left:809.80px;top:671.30px;width:528.90px;height:253.30px;background:#fff;border-radius:12px;box-shadow:inset 1px 0 0 rgba(0,0,0,.11),inset -1px 0 0 rgba(0,0,0,.11),inset 0 -1px 0 rgba(0,0,0,.16),inset 0 1px 0 rgba(204,204,204,.5),0 1px 0 rgba(26,26,26,.07);"></div>
<div class="md" style="position:absolute;left:826.20px;top:688.00px;font-size:13px;line-height:1;white-space:nowrap;color:#303030;letter-spacing:0.48px;">Average order value over time</div>
<div class="dots" style="left:826.2px;top:702.2px;width:187.0px"></div>
<div style="position:absolute;left:826.20px;top:720.07px;font-size:20px;line-height:1;white-space:nowrap;color:#303030;-webkit-text-stroke:0.6px #303030;letter-spacing:0.65px;">$168.98</div>
<div class="md" style="position:absolute;left:911.00px;top:725.27px;font-size:11.5px;line-height:1;white-space:nowrap;color:#5a5a5a;letter-spacing:0.3px;"><svg width="7" height="7" viewBox="0 0 8 8" style="display:inline-block;vertical-align:0px;margin-right:2.5px"><path d="M1.6 1.6 L6 6 M6.3 2.4 L6.3 6.3 L2.4 6.3" fill="none" stroke="#4a4a4a" stroke-width="1.5" stroke-linecap="square"/></svg>53%</div>
<div style="position:absolute;left:880.00px;top:765.20px;width:440.00px;height:1.00px;background:#ebebeb;"></div>
<div style="position:absolute;left:828.00px;top:760.29px;font-size:11px;line-height:1;white-space:nowrap;color:#616161;">$1K</div>
<div style="position:absolute;left:828.00px;top:833.19px;font-size:11px;line-height:1;white-space:nowrap;color:#616161;">$0</div>
<div style="position:absolute;left:850.00px;width:60px;text-align:center;top:854.69px;font-size:11px;line-height:1;white-space:nowrap;color:#616161;letter-spacing:0.25px;">Aug 5</div>
<div style="position:absolute;left:914.30px;width:60px;text-align:center;top:854.69px;font-size:11px;line-height:1;white-space:nowrap;color:#616161;letter-spacing:0.25px;">Aug 18</div>
<div style="position:absolute;left:978.60px;width:60px;text-align:center;top:854.69px;font-size:11px;line-height:1;white-space:nowrap;color:#616161;letter-spacing:0.25px;">Aug 31</div>
<div style="position:absolute;left:1042.89px;width:60px;text-align:center;top:854.69px;font-size:11px;line-height:1;white-space:nowrap;color:#616161;letter-spacing:0.25px;">Sep 13</div>
<div style="position:absolute;left:1107.19px;width:60px;text-align:center;top:854.69px;font-size:11px;line-height:1;white-space:nowrap;color:#616161;letter-spacing:0.25px;">Sep 26</div>
<div style="position:absolute;left:1171.49px;width:60px;text-align:center;top:854.69px;font-size:11px;line-height:1;white-space:nowrap;color:#616161;letter-spacing:0.25px;">Oct 9</div>
<div style="position:absolute;left:1235.79px;width:60px;text-align:center;top:854.69px;font-size:11px;line-height:1;white-space:nowrap;color:#616161;letter-spacing:0.25px;">Oct 22</div>
<svg style="position:absolute;left:0;top:0" width="1919" height="940"><path d="M880.00,839.00L884.94,839.00L889.89,839.00L894.83,839.00L899.78,839.00L904.72,839.00L909.66,839.00L914.61,839.00L919.55,839.00L924.49,839.00L929.44,839.00C931.91,839.00 931.91,836.73 934.38,836.73C936.85,836.73 936.85,839.00 939.33,839.00L944.27,839.00L949.21,839.00L954.16,839.00L959.10,839.00L964.04,839.00L968.99,839.00L973.93,839.00L978.88,839.00L983.82,839.00C986.29,839.00 986.29,799.05 988.76,799.05C991.24,799.05 991.24,839.00 993.71,839.00C996.18,839.00 996.18,783.88 998.65,783.88C1001.12,783.88 1001.12,819.94 1003.60,819.94C1006.07,819.94 1006.07,839.00 1008.54,839.00L1013.48,839.00L1018.43,839.00L1023.37,839.00L1028.31,839.00L1033.26,839.00L1038.20,839.00L1043.15,839.00L1048.09,839.00L1053.03,839.00L1057.98,839.00L1062.92,839.00L1067.87,839.00L1072.81,839.00L1077.75,839.00L1082.70,839.00L1087.64,839.00L1092.58,839.00L1097.53,839.00L1102.47,839.00L1107.42,839.00L1112.36,839.00L1117.30,839.00L1122.25,839.00L1127.19,839.00L1132.13,839.00L1137.08,839.00L1142.02,839.00L1146.97,839.00L1151.91,839.00L1156.85,839.00L1161.80,839.00L1166.74,839.00L1171.69,839.00L1176.63,839.00L1181.57,839.00L1186.52,839.00L1191.46,839.00L1196.40,839.00L1201.35,839.00L1206.29,839.00L1211.24,839.00L1216.18,839.00L1221.12,839.00L1226.07,839.00L1231.01,839.00L1235.96,839.00L1240.90,839.00L1245.84,839.00L1250.79,839.00L1255.73,839.00L1260.67,839.00L1265.62,839.00L1270.56,839.00L1275.51,839.00L1280.45,839.00L1285.39,839.00L1290.34,839.00L1295.28,839.00L1300.22,839.00L1305.17,839.00L1310.11,839.00L1315.06,839.00L1320.00,839.00" fill="none" stroke="#96c6e3" stroke-width="1.6" stroke-dasharray="0.1 3.6" stroke-linecap="round"/><path d="M880.00,839.00L884.94,839.00C887.42,839.00 887.42,826.69 889.89,826.69C892.36,826.69 892.36,839.00 894.83,839.00L899.78,839.00L904.72,839.00C907.19,839.00 907.19,833.50 909.66,833.50C912.13,833.50 912.13,829.40 914.61,829.40C917.08,829.40 917.08,839.00 919.55,839.00L924.49,839.00L929.44,839.00L934.38,839.00L939.33,839.00L944.27,839.00C946.74,839.00 946.74,832.99 949.21,832.99C951.69,832.99 951.69,839.00 954.16,839.00C956.63,839.00 956.63,830.79 959.10,830.79C961.57,830.79 961.57,834.90 964.04,834.90C966.52,834.90 966.52,839.00 968.99,839.00L973.93,839.00C976.40,839.00 976.40,836.73 978.88,836.73C981.35,836.73 981.35,839.00 983.82,839.00L988.76,839.00L993.71,839.00L998.65,839.00L1003.60,839.00L1008.54,839.00L1013.48,839.00L1018.43,839.00L1023.37,839.00L1028.31,839.00L1033.26,839.00C1035.73,839.00 1035.73,829.40 1038.20,829.40C1040.67,829.40 1040.67,814.52 1043.15,814.52C1045.62,814.52 1045.62,833.50 1048.09,833.50C1050.56,833.50 1050.56,837.53 1053.03,837.53C1055.51,837.53 1055.51,839.00 1057.98,839.00L1062.92,839.00L1067.87,839.00L1072.81,839.00L1077.75,839.00L1082.70,839.00L1087.64,839.00L1092.58,839.00L1097.53,839.00L1102.47,839.00C1104.94,839.00 1104.94,826.69 1107.42,826.69C1109.89,826.69 1109.89,839.00 1112.36,839.00L1117.30,839.00C1119.78,839.00 1119.78,834.90 1122.25,834.90C1124.72,834.90 1124.72,839.00 1127.19,839.00L1132.13,839.00L1137.08,839.00L1142.02,839.00L1146.97,839.00L1151.91,839.00C1154.38,839.00 1154.38,834.97 1156.85,834.97C1159.33,834.97 1159.33,836.07 1161.80,836.07C1164.27,836.07 1164.27,839.00 1166.74,839.00L1171.69,839.00L1176.63,839.00L1181.57,839.00L1186.52,839.00L1191.46,839.00L1196.40,839.00L1201.35,839.00L1206.29,839.00L1211.24,839.00L1216.18,839.00L1221.12,839.00L1226.07,839.00C1228.54,839.00 1228.54,836.73 1231.01,836.73C1233.48,836.73 1233.48,839.00 1235.96,839.00L1240.90,839.00L1245.84,839.00L1250.79,839.00L1255.73,839.00L1260.67,839.00L1265.62,839.00L1270.56,839.00L1275.51,839.00L1280.45,839.00C1282.92,839.00 1282.92,799.05 1285.39,799.05C1287.87,799.05 1287.87,839.00 1290.34,839.00C1292.81,839.00 1292.81,783.88 1295.28,783.88C1297.75,783.88 1297.75,819.94 1300.22,819.94C1302.70,819.94 1302.70,839.00 1305.17,839.00L1310.11,839.00L1315.06,839.00L1320.00,839.00" fill="none" stroke="#3592c8" stroke-width="2" stroke-linejoin="round"/></svg>
<div style="position:absolute;left:943.00px;top:896.00px;width:14.00px;height:2.00px;background:#3592c8;border-radius:1px;"></div>
<div style="position:absolute;left:963.00px;top:891.69px;font-size:11px;line-height:1;white-space:nowrap;color:#616161;letter-spacing:0.3px;">Aug 5–Nov 2, 2024</div>
<svg style="position:absolute;left:1079px;top:894px" width="16" height="6"><path d="M2 3 L14 3" stroke="#96c6e3" stroke-width="1.6" stroke-dasharray="0.1 4.2" stroke-linecap="round"/></svg>
<div style="position:absolute;left:1101.00px;top:891.69px;font-size:11px;line-height:1;white-space:nowrap;color:#616161;letter-spacing:0.3px;">Oct 4–Nov 3, 2024</div>
<div style="position:absolute;left:1355.70px;top:671.30px;width:528.90px;height:253.30px;background:#fff;border-radius:12px;box-shadow:inset 1px 0 0 rgba(0,0,0,.11),inset -1px 0 0 rgba(0,0,0,.11),inset 0 -1px 0 rgba(0,0,0,.16),inset 0 1px 0 rgba(204,204,204,.5),0 1px 0 rgba(26,26,26,.07);overflow:hidden;"></div>
<div class="md" style="position:absolute;left:1371.20px;top:688.00px;font-size:13px;line-height:1;white-space:nowrap;color:#303030;letter-spacing:0.48px;">Total sales by product</div>
<div class="dots" style="left:1371.2px;top:702.2px;width:137.0px"></div>
<div style="position:absolute;left:1371.00px;top:728.47px;font-size:11.5px;line-height:1;white-space:nowrap;color:#616161;"><span style="letter-spacing:0.08px">5 Foot Artificial Silk Birch Tree Custom Made on Natural Wood · Silk Plants Canada · Artificial ...</span></div>
<div style="position:absolute;left:1371.00px;top:743.00px;width:441.00px;height:31.00px;background:linear-gradient(90deg,#3595d6,#4fb6ec);border-radius:0 3px 3px 0;"></div>
<div style="position:absolute;left:1371.00px;top:776.60px;width:441.00px;height:31.40px;background:#95c8e8;border-radius:0 3px 3px 0;"></div>
<div style="position:absolute;left:1822.00px;top:753.69px;font-size:11px;line-height:1;white-space:nowrap;color:#616161;">$787.5</div>
<div style="position:absolute;left:1822.00px;top:786.69px;font-size:11px;line-height:1;white-space:nowrap;color:#616161;">$787.5</div>
<div style="position:absolute;left:1371.00px;top:828.97px;font-size:11.5px;line-height:1;white-space:nowrap;color:#616161;"><span style="letter-spacing:0.03px">7 Foot Artificial Silk Dragon Tree Custom Made on Natural Wood RHS · Silk Plants Canada · Ar...</span></div>
<div style="position:absolute;left:1371.00px;top:844.00px;width:329.00px;height:31.00px;background:linear-gradient(90deg,#3595d6,#45a9e4);"></div>
<div style="position:absolute;left:1371.00px;top:877.60px;width:329.00px;height:31.40px;background:#95c8e8;"></div>
<div style="position:absolute;left:1586.00px;top:844.00px;width:208.50px;height:88.00px;background:linear-gradient(135deg,#e2eef9,#f1f5fa 60%,#f5f7fa);border-radius:9px;box-shadow:0 0 0 1px rgba(0,0,0,0.06),0 4px 10px rgba(0,0,0,0.12);"></div>
<div style="position:absolute;left:1711.60px;top:849.40px;width:37.20px;height:37.60px;background:rgba(255,255,255,0.7);border-radius:4px;"></div>
<svg style="position:absolute;left:0;top:0" width="1919" height="940"><path d="M1603.5 862.5 C1605 860.2 1609 859.8 1612.5 860 C1616 860.3 1618.6 862 1618.8 866 C1619 870.5 1618 874.6 1614 876 C1610.5 876.8 1606 876.4 1603.8 874.2 C1601.6 871.8 1601.6 865.5 1603.5 862.5 Z" fill="#5fa520"/><path d="M1606.6 868.4 L1609.2 870.6 L1613.8 865.8" fill="none" stroke="#fff" stroke-width="1.7" stroke-linecap="round" stroke-linejoin="round"/><path d="M1641.6 864.5 L1657 866 L1647.5 874.6 Z" fill="#5a5a66"/><circle cx="1653.4" cy="864.7" r="4.8" fill="#d8304a"/><path d="M1651.8 863.1 L1655 866.3 M1655 863.1 L1651.8 866.3" stroke="#fff" stroke-width="1"/><g fill="none" stroke="#4a4a4a" stroke-width="1.05"><rect x="1682.6" y="867.6" width="7.4" height="3.3" rx="1.65"/><rect x="1685.6" y="860.9" width="3.3" height="7.4" rx="1.65"/><rect x="1689.4" y="866.1" width="7.4" height="3.3" rx="1.65"/><rect x="1690.4" y="869.1" width="3.3" height="7.4" rx="1.65"/><path d="M1690.4 864.8 L1690.4 862.6 A1.65 1.65 0 1 1 1692.1 864.8 Z"/><path d="M1688.9 872.2 L1688.9 874.8 A1.65 1.65 0 1 1 1687.2 872.2 Z"/></g><path d="M1722.6 875.4 C1722.8 871.5 1726 866.5 1731 862.8 C1733.5 861 1735.6 860.2 1737.2 859.9 C1736.8 863.5 1734.6 867.8 1730.6 871 C1728 873.1 1725 874.6 1722.6 875.4 Z" fill="#9461d6"/><path d="M1723.2 874.8 C1727 870.5 1731 866 1736 861" stroke="#b48ee8" stroke-width="0.7" fill="none"/><path d="M1764 865 C1764 861.8 1766.6 860 1770 860 C1773.4 860 1776 861.8 1776 865 L1774.6 865.6 C1773.6 864 1772 863.4 1770 863.4 C1768 863.4 1766.4 864 1765.4 865.6 Z" fill="#2b2b2b"/><path d="M1765.6 866.4 C1766.6 865 1768.2 864.4 1770 864.4 C1771.8 864.4 1773.4 865 1774.4 866.4 L1774.2 875 C1774.2 875.8 1772.4 876.2 1770 876.2 C1767.6 876.2 1765.8 875.8 1765.8 875 Z" fill="#2b2b2b"/><path d="M1768 867.6 L1768 874 M1772 867.6 L1772 874 M1768 870.8 L1772 870.8" stroke="#d8d8d8" stroke-width="1.1"/><path d="M1610.8 900 L1617.6 902.2 L1617.6 907.5 C1617.6 911.6 1614.6 914.4 1610.8 916 C1607 914.4 1603.6 911.6 1603.6 907.5 L1603.6 902.2 Z" fill="#1b7fd4"/><path d="M1610.8 900 L1617.6 902.2 L1617.6 907.5 L1610.8 907.5 Z" fill="#44b0f0"/><path d="M1613.6 909 L1618.5 917 L1608.7 917 Z" fill="#f5c342" stroke="#f5c342" stroke-width="0.8" stroke-linejoin="round"/><path d="M1613.6 911.2 L1613.6 914" stroke="#333" stroke-width="0.9"/><circle cx="1613.6" cy="915.5" r="0.5" fill="#333"/><rect x="1644.2" y="899.8" width="11.6" height="16.6" rx="5.8" fill="#0a78d6"/><path d="M1647.4 904.8 L1652.6 909.6 L1650 912.2 L1650 903.2 L1652.6 905.8 L1647.4 910.6" fill="none" stroke="#fff" stroke-width="1" stroke-linejoin="round"/></svg>
<svg style="position:absolute;left:0;top:0" width="1919" height="940"><defs><linearGradient id="sg" x1="0" y1="0" x2="0" y2="1"><stop offset="0" stop-color="#4aa8e0"/><stop offset="1" stop-color="#4aa8e0" stop-opacity="0.1"/></linearGradient></defs><path d="M562.20,233.00L563.07,233.00C563.50,233.00 563.50,225.78 563.93,225.78C564.37,225.78 564.37,233.00 564.80,233.00L565.67,233.00L566.54,233.00C566.97,233.00 566.97,231.21 567.40,231.21C567.84,231.21 567.84,230.24 568.27,230.24C568.71,230.24 568.71,233.00 569.14,233.00L570.01,233.00L570.87,233.00L571.74,233.00L572.61,233.00L573.48,233.00C573.91,233.00 573.91,231.13 574.34,231.13C574.78,231.13 574.78,233.00 575.21,233.00C575.64,233.00 575.64,230.40 576.08,230.40C576.51,230.40 576.51,231.94 576.95,231.94C577.38,231.94 577.38,233.00 577.81,233.00L578.68,233.00C579.11,233.00 579.11,232.35 579.55,232.35C579.98,232.35 579.98,233.00 580.42,233.00L581.28,233.00L582.15,233.00L583.02,233.00L583.89,233.00L584.75,233.00L585.62,233.00L586.49,233.00L587.36,233.00L588.22,233.00L589.09,233.00C589.52,233.00 589.52,226.10 589.96,226.10C590.39,226.10 590.39,227.48 590.82,227.48C591.26,227.48 591.26,231.54 591.69,231.54C592.13,231.54 592.13,231.21 592.56,231.21C592.99,231.21 592.99,233.00 593.43,233.00L594.29,233.00L595.16,233.00L596.03,233.00L596.90,233.00L597.76,233.00L598.63,233.00L599.50,233.00L600.37,233.00L601.23,233.00C601.67,233.00 601.67,229.75 602.10,229.75C602.53,229.75 602.53,233.00 602.97,233.00L603.84,233.00C604.27,233.00 604.27,231.78 604.70,231.78C605.14,231.78 605.14,233.00 605.57,233.00L606.44,233.00L607.31,233.00L608.17,233.00L609.04,233.00L609.91,233.00C610.34,233.00 610.34,231.98 610.78,231.98C611.21,231.98 611.21,232.06 611.64,232.06C612.08,232.06 612.08,233.00 612.51,233.00L613.38,233.00L614.24,233.00L615.11,233.00L615.98,233.00L616.85,233.00L617.71,233.00L618.58,233.00L619.45,233.00L620.32,233.00L621.18,233.00L622.05,233.00L622.92,233.00C623.35,233.00 623.35,232.19 623.79,232.19C624.22,232.19 624.22,233.00 624.65,233.00L625.52,233.00L626.39,233.00L627.26,233.00L628.12,233.00L628.99,233.00L629.86,233.00L630.73,233.00L631.59,233.00L632.46,233.00C632.89,233.00 632.89,222.61 633.33,222.61C633.76,222.61 633.76,233.00 634.20,233.00C634.63,233.00 634.63,216.20 635.06,216.20C635.50,216.20 635.50,223.18 635.93,223.18C636.36,223.18 636.36,233.00 636.80,233.00L637.67,233.00L638.53,233.00L639.40,233.00L639.4,234.0L562.2,234.0Z" fill="url(#sg)" opacity="0.3"/><path d="M562.20,233.00L563.07,233.00L563.93,233.00L564.80,233.00L565.67,233.00L566.54,233.00L567.40,233.00L568.27,233.00L569.14,233.00L570.01,233.00L570.87,233.00C571.31,233.00 571.31,232.19 571.74,232.19C572.18,232.19 572.18,233.00 572.61,233.00L573.48,233.00L574.34,233.00L575.21,233.00L576.08,233.00L576.95,233.00L577.81,233.00L578.68,233.00L579.55,233.00L580.42,233.00C580.85,233.00 580.85,222.61 581.28,222.61C581.72,222.61 581.72,233.00 582.15,233.00C582.58,233.00 582.58,216.20 583.02,216.20C583.45,216.20 583.45,223.18 583.89,223.18C584.32,223.18 584.32,233.00 584.75,233.00L585.62,233.00L586.49,233.00L587.36,233.00L588.22,233.00L589.09,233.00L589.96,233.00L590.82,233.00L591.69,233.00L592.56,233.00L593.43,233.00L594.29,233.00L595.16,233.00L596.03,233.00L596.90,233.00L597.76,233.00L598.63,233.00L599.50,233.00L600.37,233.00L601.23,233.00L602.10,233.00L602.97,233.00L603.84,233.00L604.70,233.00L605.57,233.00L606.44,233.00L607.31,233.00L608.17,233.00L609.04,233.00L609.91,233.00L610.78,233.00L611.64,233.00L612.51,233.00L613.38,233.00L614.24,233.00L615.11,233.00L615.98,233.00L616.85,233.00L617.71,233.00L618.58,233.00L619.45,233.00L620.32,233.00L621.18,233.00L622.05,233.00L622.92,233.00L623.79,233.00L624.65,233.00L625.52,233.00L626.39,233.00L627.26,233.00L628.12,233.00L628.99,233.00L629.86,233.00L630.73,233.00L631.59,233.00L632.46,233.00L633.33,233.00L634.20,233.00L635.06,233.00L635.93,233.00L636.80,233.00L637.67,233.00L638.53,233.00L639.40,233.00" fill="none" stroke="#a0a8b0" stroke-width="1" stroke-dasharray="1 2"/><path d="M562.20,233.00L563.07,233.00C563.50,233.00 563.50,225.78 563.93,225.78C564.37,225.78 564.37,233.00 564.80,233.00L565.67,233.00L566.54,233.00C566.97,233.00 566.97,231.21 567.40,231.21C567.84,231.21 567.84,230.24 568.27,230.24C568.71,230.24 568.71,233.00 569.14,233.00L570.01,233.00L570.87,233.00L571.74,233.00L572.61,233.00L573.48,233.00C573.91,233.00 573.91,231.13 574.34,231.13C574.78,231.13 574.78,233.00 575.21,233.00C575.64,233.00 575.64,230.40 576.08,230.40C576.51,230.40 576.51,231.94 576.95,231.94C577.38,231.94 577.38,233.00 577.81,233.00L578.68,233.00C579.11,233.00 579.11,232.35 579.55,232.35C579.98,232.35 579.98,233.00 580.42,233.00L581.28,233.00L582.15,233.00L583.02,233.00L583.89,233.00L584.75,233.00L585.62,233.00L586.49,233.00L587.36,233.00L588.22,233.00L589.09,233.00C589.52,233.00 589.52,226.10 589.96,226.10C590.39,226.10 590.39,227.48 590.82,227.48C591.26,227.48 591.26,231.54 591.69,231.54C592.13,231.54 592.13,231.21 592.56,231.21C592.99,231.21 592.99,233.00 593.43,233.00L594.29,233.00L595.16,233.00L596.03,233.00L596.90,233.00L597.76,233.00L598.63,233.00L599.50,233.00L600.37,233.00L601.23,233.00C601.67,233.00 601.67,229.75 602.10,229.75C602.53,229.75 602.53,233.00 602.97,233.00L603.84,233.00C604.27,233.00 604.27,231.78 604.70,231.78C605.14,231.78 605.14,233.00 605.57,233.00L606.44,233.00L607.31,233.00L608.17,233.00L609.04,233.00L609.91,233.00C610.34,233.00 610.34,231.98 610.78,231.98C611.21,231.98 611.21,232.06 611.64,232.06C612.08,232.06 612.08,233.00 612.51,233.00L613.38,233.00L614.24,233.00L615.11,233.00L615.98,233.00L616.85,233.00L617.71,233.00L618.58,233.00L619.45,233.00L620.32,233.00L621.18,233.00L622.05,233.00L622.92,233.00C623.35,233.00 623.35,232.19 623.79,232.19C624.22,232.19 624.22,233.00 624.65,233.00L625.52,233.00L626.39,233.00L627.26,233.00L628.12,233.00L628.99,233.00L629.86,233.00L630.73,233.00L631.59,233.00L632.46,233.00C632.89,233.00 632.89,222.61 633.33,222.61C633.76,222.61 633.76,233.00 634.20,233.00C634.63,233.00 634.63,216.20 635.06,216.20C635.50,216.20 635.50,223.18 635.93,223.18C636.36,223.18 636.36,233.00 636.80,233.00L637.67,233.00L638.53,233.00L639.40,233.00" fill="none" stroke="#3d95c9" stroke-width="1.3" stroke-linejoin="round"/></svg>
<svg style="position:absolute;left:0;top:0" width="1919" height="940"><defs><linearGradient id="sg" x1="0" y1="0" x2="0" y2="1"><stop offset="0" stop-color="#4aa8e0"/><stop offset="1" stop-color="#4aa8e0" stop-opacity="0.1"/></linearGradient></defs><path d="M971.20,233.00L972.06,233.00L972.93,233.00L973.79,233.00L974.65,233.00L975.51,233.00L976.38,233.00L977.24,233.00L978.10,233.00L978.97,233.00L979.83,233.00L980.69,233.00L981.56,233.00L982.42,233.00L983.28,233.00L984.14,233.00L985.01,233.00L985.87,233.00L986.73,233.00L987.60,233.00L988.46,233.00L989.32,233.00L990.18,233.00L991.05,233.00L991.91,233.00L992.77,233.00L993.64,233.00L994.50,233.00L995.36,233.00L996.22,233.00L997.09,233.00L997.95,233.00L998.81,233.00C999.24,233.00 999.24,216.20 999.68,216.20C1000.11,216.20 1000.11,233.00 1000.54,233.00L1001.40,233.00L1002.27,233.00L1003.13,233.00L1003.99,233.00L1004.85,233.00L1005.72,233.00L1006.58,233.00L1007.44,233.00L1008.31,233.00L1009.17,233.00L1010.03,233.00L1010.89,233.00L1011.76,233.00L1012.62,233.00L1013.48,233.00L1014.35,233.00L1015.21,233.00L1016.07,233.00L1016.93,233.00L1017.80,233.00L1018.66,233.00L1019.52,233.00L1020.39,233.00L1021.25,233.00L1022.11,233.00L1022.98,233.00L1023.84,233.00L1024.70,233.00L1025.56,233.00L1026.43,233.00L1027.29,233.00L1028.15,233.00L1029.02,233.00L1029.88,233.00L1030.74,233.00L1031.60,233.00L1032.47,233.00L1033.33,233.00L1034.19,233.00L1035.06,233.00L1035.92,233.00L1036.78,233.00L1037.64,233.00L1038.51,233.00L1039.37,233.00L1040.23,233.00L1041.10,233.00L1041.96,233.00L1042.82,233.00L1043.69,233.00C1044.12,233.00 1044.12,216.20 1044.55,216.20C1044.98,216.20 1044.98,233.00 1045.41,233.00L1046.27,233.00L1047.14,233.00L1048.00,233.00L1048.0,234.0L971.2,234.0Z" fill="url(#sg)" opacity="0.3"/><path d="M971.20,233.00L972.06,233.00L972.93,233.00L973.79,233.00L974.65,233.00L975.51,233.00L976.38,233.00L977.24,233.00L978.10,233.00L978.97,233.00L979.83,233.00L980.69,233.00L981.56,233.00L982.42,233.00L983.28,233.00L984.14,233.00L985.01,233.00L985.87,233.00L986.73,233.00L987.60,233.00L988.46,233.00L989.32,233.00L990.18,233.00L991.05,233.00L991.91,233.00L992.77,233.00C993.20,233.00 993.20,216.20 993.64,216.20C994.07,216.20 994.07,233.00 994.50,233.00L995.36,233.00L996.22,233.00L997.09,233.00L997.95,233.00L998.81,233.00L999.68,233.00L1000.54,233.00L1001.40,233.00L1002.27,233.00L1003.13,233.00L1003.99,233.00L1004.85,233.00L1005.72,233.00L1006.58,233.00L1007.44,233.00L1008.31,233.00L1009.17,233.00L1010.03,233.00L1010.89,233.00L1011.76,233.00L1012.62,233.00L1013.48,233.00L1014.35,233.00L1015.21,233.00L1016.07,233.00L1016.93,233.00L1017.80,233.00L1018.66,233.00L1019.52,233.00L1020.39,233.00L1021.25,233.00L1022.11,233.00L1022.98,233.00L1023.84,233.00L1024.70,233.00L1025.56,233.00L1026.43,233.00L1027.29,233.00L1028.15,233.00L1029.02,233.00L1029.88,233.00L1030.74,233.00L1031.60,233.00L1032.47,233.00L1033.33,233.00L1034.19,233.00L1035.06,233.00L1035.92,233.00L1036.78,233.00L1037.64,233.00L1038.51,233.00L1039.37,233.00L1040.23,233.00L1041.10,233.00L1041.96,233.00L1042.82,233.00L1043.69,233.00L1044.55,233.00L1045.41,233.00L1046.27,233.00L1047.14,233.00L1048.00,233.00" fill="none" stroke="#a0a8b0" stroke-width="1" stroke-dasharray="1 2"/><path d="M971.20,233.00L972.06,233.00L972.93,233.00L973.79,233.00L974.65,233.00L975.51,233.00L976.38,233.00L977.24,233.00L978.10,233.00L978.97,233.00L979.83,233.00L980.69,233.00L981.56,233.00L982.42,233.00L983.28,233.00L984.14,233.00L985.01,233.00L985.87,233.00L986.73,233.00L987.60,233.00L988.46,233.00L989.32,233.00L990.18,233.00L991.05,233.00L991.91,233.00L992.77,233.00L993.64,233.00L994.50,233.00L995.36,233.00L996.22,233.00L997.09,233.00L997.95,233.00L998.81,233.00C999.24,233.00 999.24,216.20 999.68,216.20C1000.11,216.20 1000.11,233.00 1000.54,233.00L1001.40,233.00L1002.27,233.00L1003.13,233.00L1003.99,233.00L1004.85,233.00L1005.72,233.00L1006.58,233.00L1007.44,233.00L1008.31,233.00L1009.17,233.00L1010.03,233.00L1010.89,233.00L1011.76,233.00L1012.62,233.00L1013.48,233.00L1014.35,233.00L1015.21,233.00L1016.07,233.00L1016.93,233.00L1017.80,233.00L1018.66,233.00L1019.52,233.00L1020.39,233.00L1021.25,233.00L1022.11,233.00L1022.98,233.00L1023.84,233.00L1024.70,233.00L1025.56,233.00L1026.43,233.00L1027.29,233.00L1028.15,233.00L1029.02,233.00L1029.88,233.00L1030.74,233.00L1031.60,233.00L1032.47,233.00L1033.33,233.00L1034.19,233.00L1035.06,233.00L1035.92,233.00L1036.78,233.00L1037.64,233.00L1038.51,233.00L1039.37,233.00L1040.23,233.00L1041.10,233.00L1041.96,233.00L1042.82,233.00L1043.69,233.00C1044.12,233.00 1044.12,216.20 1044.55,216.20C1044.98,216.20 1044.98,233.00 1045.41,233.00L1046.27,233.00L1047.14,233.00L1048.00,233.00" fill="none" stroke="#3d95c9" stroke-width="1.3" stroke-linejoin="round"/></svg>
<svg style="position:absolute;left:0;top:0" width="1919" height="940"><defs><linearGradient id="sg" x1="0" y1="0" x2="0" y2="1"><stop offset="0" stop-color="#4aa8e0"/><stop offset="1" stop-color="#4aa8e0" stop-opacity="0.1"/></linearGradient></defs><path d="M1381.20,233.00L1382.06,233.00L1382.93,233.00L1383.79,233.00L1384.65,233.00L1385.51,233.00L1386.38,233.00C1386.81,233.00 1386.81,224.60 1387.24,224.60C1387.67,224.60 1387.67,233.00 1388.10,233.00C1388.53,233.00 1388.53,224.60 1388.97,224.60C1389.40,224.60 1389.40,233.00 1389.83,233.00L1390.69,233.00L1391.56,233.00L1392.42,233.00L1393.28,233.00L1394.14,233.00L1395.01,233.00L1395.87,233.00C1396.30,233.00 1396.30,224.60 1396.73,224.60C1397.16,224.60 1397.16,233.00 1397.60,233.00L1398.46,233.00L1399.32,233.00L1400.18,233.00L1401.05,233.00C1401.48,233.00 1401.48,224.60 1401.91,224.60C1402.34,224.60 1402.34,233.00 1402.77,233.00L1403.64,233.00L1404.50,233.00L1405.36,233.00L1406.22,233.00L1407.09,233.00L1407.95,233.00L1408.81,233.00L1409.68,233.00L1410.54,233.00L1411.40,233.00L1412.27,233.00C1412.70,233.00 1412.70,216.20 1413.13,216.20C1413.56,216.20 1413.56,233.00 1413.99,233.00L1414.85,233.00L1415.72,233.00L1416.58,233.00L1417.44,233.00L1418.31,233.00L1419.17,233.00L1420.03,233.00L1420.89,233.00L1421.76,233.00L1422.62,233.00L1423.48,233.00C1423.91,233.00 1423.91,228.80 1424.35,228.80C1424.78,228.80 1424.78,233.00 1425.21,233.00L1426.07,233.00L1426.93,233.00L1427.80,233.00L1428.66,233.00L1429.52,233.00L1430.39,233.00C1430.82,233.00 1430.82,224.60 1431.25,224.60C1431.68,224.60 1431.68,228.80 1432.11,228.80C1432.54,228.80 1432.54,233.00 1432.98,233.00L1433.84,233.00L1434.70,233.00L1435.56,233.00L1436.43,233.00L1437.29,233.00L1438.15,233.00L1439.02,233.00L1439.88,233.00L1440.74,233.00L1441.60,233.00L1442.47,233.00L1443.33,233.00L1444.19,233.00L1445.06,233.00L1445.92,233.00L1446.78,233.00C1447.21,233.00 1447.21,228.80 1447.64,228.80C1448.08,228.80 1448.08,233.00 1448.51,233.00L1449.37,233.00L1450.23,233.00L1451.10,233.00L1451.96,233.00L1452.82,233.00L1453.69,233.00L1454.55,233.00C1454.98,233.00 1454.98,228.80 1455.41,228.80C1455.84,228.80 1455.84,233.00 1456.27,233.00L1457.14,233.00C1457.57,233.00 1457.57,228.80 1458.00,228.80L1458.0,234.0L1381.2,234.0Z" fill="url(#sg)" opacity="0.3"/><path d="M1381.20,233.00L1382.06,233.00L1382.93,233.00L1383.79,233.00L1384.65,233.00L1385.51,233.00L1386.38,233.00L1387.24,233.00L1388.10,233.00L1388.97,233.00L1389.83,233.00L1390.69,233.00L1391.56,233.00L1392.42,233.00L1393.28,233.00L1394.14,233.00L1395.01,233.00L1395.87,233.00L1396.73,233.00L1397.60,233.00L1398.46,233.00L1399.32,233.00L1400.18,233.00L1401.05,233.00L1401.91,233.00L1402.77,233.00L1403.64,233.00L1404.50,233.00C1404.93,233.00 1404.93,231.32 1405.36,231.32C1405.79,231.32 1405.79,233.00 1406.22,233.00L1407.09,233.00L1407.95,233.00L1408.81,233.00L1409.68,233.00L1410.54,233.00L1411.40,233.00L1412.27,233.00L1413.13,233.00L1413.99,233.00L1414.85,233.00L1415.72,233.00L1416.58,233.00L1417.44,233.00L1418.31,233.00L1419.17,233.00L1420.03,233.00L1420.89,233.00L1421.76,233.00L1422.62,233.00L1423.48,233.00L1424.35,233.00L1425.21,233.00L1426.07,233.00L1426.93,233.00L1427.80,233.00L1428.66,233.00L1429.52,233.00L1430.39,233.00L1431.25,233.00L1432.11,233.00L1432.98,233.00L1433.84,233.00L1434.70,233.00L1435.56,233.00L1436.43,233.00L1437.29,233.00L1438.15,233.00L1439.02,233.00L1439.88,233.00L1440.74,233.00L1441.60,233.00L1442.47,233.00L1443.33,233.00L1444.19,233.00L1445.06,233.00L1445.92,233.00L1446.78,233.00L1447.64,233.00L1448.51,233.00L1449.37,233.00L1450.23,233.00L1451.10,233.00L1451.96,233.00L1452.82,233.00L1453.69,233.00L1454.55,233.00L1455.41,233.00L1456.27,233.00L1457.14,233.00L1458.00,233.00" fill="none" stroke="#a0a8b0" stroke-width="1" stroke-dasharray="1 2"/><path d="M1381.20,233.00L1382.06,233.00L1382.93,233.00L1383.79,233.00L1384.65,233.00L1385.51,233.00L1386.38,233.00C1386.81,233.00 1386.81,224.60 1387.24,224.60C1387.67,224.60 1387.67,233.00 1388.10,233.00C1388.53,233.00 1388.53,224.60 1388.97,224.60C1389.40,224.60 1389.40,233.00 1389.83,233.00L1390.69,233.00L1391.56,233.00L1392.42,233.00L1393.28,233.00L1394.14,233.00L1395.01,233.00L1395.87,233.00C1396.30,233.00 1396.30,224.60 1396.73,224.60C1397.16,224.60 1397.16,233.00 1397.60,233.00L1398.46,233.00L1399.32,233.00L1400.18,233.00L1401.05,233.00C1401.48,233.00 1401.48,224.60 1401.91,224.60C1402.34,224.60 1402.34,233.00 1402.77,233.00L1403.64,233.00L1404.50,233.00L1405.36,233.00L1406.22,233.00L1407.09,233.00L1407.95,233.00L1408.81,233.00L1409.68,233.00L1410.54,233.00L1411.40,233.00L1412.27,233.00C1412.70,233.00 1412.70,216.20 1413.13,216.20C1413.56,216.20 1413.56,233.00 1413.99,233.00L1414.85,233.00L1415.72,233.00L1416.58,233.00L1417.44,233.00L1418.31,233.00L1419.17,233.00L1420.03,233.00L1420.89,233.00L1421.76,233.00L1422.62,233.00L1423.48,233.00C1423.91,233.00 1423.91,228.80 1424.35,228.80C1424.78,228.80 1424.78,233.00 1425.21,233.00L1426.07,233.00L1426.93,233.00L1427.80,233.00L1428.66,233.00L1429.52,233.00L1430.39,233.00C1430.82,233.00 1430.82,224.60 1431.25,224.60C1431.68,224.60 1431.68,228.80 1432.11,228.80C1432.54,228.80 1432.54,233.00 1432.98,233.00L1433.84,233.00L1434.70,233.00L1435.56,233.00L1436.43,233.00L1437.29,233.00L1438.15,233.00L1439.02,233.00L1439.88,233.00L1440.74,233.00L1441.60,233.00L1442.47,233.00L1443.33,233.00L1444.19,233.00L1445.06,233.00L1445.92,233.00L1446.78,233.00C1447.21,233.00 1447.21,228.80 1447.64,228.80C1448.08,228.80 1448.08,233.00 1448.51,233.00L1449.37,233.00L1450.23,233.00L1451.10,233.00L1451.96,233.00L1452.82,233.00L1453.69,233.00L1454.55,233.00C1454.98,233.00 1454.98,228.80 1455.41,228.80C1455.84,228.80 1455.84,233.00 1456.27,233.00L1457.14,233.00C1457.57,233.00 1457.57,228.80 1458.00,228.80" fill="none" stroke="#3d95c9" stroke-width="1.3" stroke-linejoin="round"/></svg>
<svg style="position:absolute;left:0;top:0" width="1919" height="940"><defs><linearGradient id="sg" x1="0" y1="0" x2="0" y2="1"><stop offset="0" stop-color="#4aa8e0"/><stop offset="1" stop-color="#4aa8e0" stop-opacity="0.1"/></linearGradient></defs><path d="M1790.40,233.00L1791.27,233.00C1791.70,233.00 1791.70,216.20 1792.14,216.20C1792.57,216.20 1792.57,233.00 1793.01,233.00L1793.88,233.00L1794.75,233.00C1795.18,233.00 1795.18,224.60 1795.62,224.60C1796.05,224.60 1796.05,233.00 1796.49,233.00L1797.36,233.00L1798.23,233.00L1799.10,233.00L1799.97,233.00L1800.84,233.00L1801.71,233.00C1802.14,233.00 1802.14,224.60 1802.58,224.60C1803.01,224.60 1803.01,233.00 1803.44,233.00C1803.88,233.00 1803.88,224.60 1804.31,224.60C1804.75,224.60 1804.75,233.00 1805.18,233.00C1805.62,233.00 1805.62,224.60 1806.05,224.60C1806.49,224.60 1806.49,233.00 1806.92,233.00C1807.36,233.00 1807.36,224.60 1807.79,224.60C1808.23,224.60 1808.23,233.00 1808.66,233.00L1809.53,233.00L1810.40,233.00L1811.27,233.00L1812.14,233.00L1813.01,233.00L1813.88,233.00L1814.75,233.00L1815.62,233.00L1816.49,233.00L1817.36,233.00C1817.79,233.00 1817.79,216.20 1818.23,216.20C1818.66,216.20 1818.66,233.00 1819.10,233.00C1819.53,233.00 1819.53,224.60 1819.97,224.60C1820.40,224.60 1820.40,233.00 1820.84,233.00L1821.71,233.00L1822.58,233.00L1823.45,233.00L1824.32,233.00L1825.19,233.00L1826.06,233.00L1826.93,233.00L1827.80,233.00L1828.67,233.00L1829.53,233.00C1829.97,233.00 1829.97,224.60 1830.40,224.60C1830.84,224.60 1830.84,233.00 1831.27,233.00L1832.14,233.00C1832.58,233.00 1832.58,224.60 1833.01,224.60C1833.45,224.60 1833.45,233.00 1833.88,233.00L1834.75,233.00L1835.62,233.00L1836.49,233.00L1837.36,233.00L1838.23,233.00C1838.67,233.00 1838.67,224.60 1839.10,224.60C1839.54,224.60 1839.54,233.00 1839.97,233.00L1840.84,233.00L1841.71,233.00L1842.58,233.00L1843.45,233.00L1844.32,233.00L1845.19,233.00L1846.06,233.00L1846.93,233.00L1847.80,233.00L1848.67,233.00L1849.54,233.00L1850.41,233.00L1851.28,233.00C1851.71,233.00 1851.71,224.60 1852.15,224.60C1852.58,224.60 1852.58,233.00 1853.02,233.00L1853.89,233.00L1854.76,233.00L1855.62,233.00L1856.49,233.00L1857.36,233.00L1858.23,233.00L1859.10,233.00L1859.97,233.00L1860.84,233.00C1861.28,233.00 1861.28,224.60 1861.71,224.60C1862.15,224.60 1862.15,233.00 1862.58,233.00C1863.02,233.00 1863.02,216.20 1863.45,216.20C1863.89,216.20 1863.89,233.00 1864.32,233.00L1865.19,233.00L1866.06,233.00L1866.93,233.00L1867.80,233.00L1867.8,234.0L1790.4,234.0Z" fill="url(#sg)" opacity="0.3"/><path d="M1790.40,233.00L1791.27,233.00L1792.14,233.00L1793.01,233.00L1793.88,233.00L1794.75,233.00L1795.62,233.00L1796.49,233.00L1797.36,233.00L1798.23,233.00L1799.10,233.00C1799.53,233.00 1799.53,224.60 1799.97,224.60C1800.40,224.60 1800.40,233.00 1800.84,233.00L1801.71,233.00L1802.58,233.00L1803.44,233.00L1804.31,233.00L1805.18,233.00L1806.05,233.00L1806.92,233.00L1807.79,233.00L1808.66,233.00C1809.10,233.00 1809.10,224.60 1809.53,224.60C1809.97,224.60 1809.97,233.00 1810.40,233.00C1810.84,233.00 1810.84,217.46 1811.27,217.46C1811.71,217.46 1811.71,224.60 1812.14,224.60C1812.58,224.60 1812.58,233.00 1813.01,233.00L1813.88,233.00L1814.75,233.00L1815.62,233.00L1816.49,233.00L1817.36,233.00L1818.23,233.00L1819.10,233.00L1819.97,233.00L1820.84,233.00L1821.71,233.00L1822.58,233.00L1823.45,233.00L1824.32,233.00L1825.19,233.00L1826.06,233.00L1826.93,233.00L1827.80,233.00L1828.67,233.00L1829.53,233.00L1830.40,233.00L1831.27,233.00L1832.14,233.00L1833.01,233.00L1833.88,233.00L1834.75,233.00L1835.62,233.00L1836.49,233.00L1837.36,233.00L1838.23,233.00L1839.10,233.00L1839.97,233.00L1840.84,233.00L1841.71,233.00L1842.58,233.00L1843.45,233.00L1844.32,233.00L1845.19,233.00L1846.06,233.00L1846.93,233.00L1847.80,233.00L1848.67,233.00L1849.54,233.00L1850.41,233.00L1851.28,233.00L1852.15,233.00L1853.02,233.00L1853.89,233.00L1854.76,233.00L1855.62,233.00L1856.49,233.00L1857.36,233.00L1858.23,233.00L1859.10,233.00L1859.97,233.00L1860.84,233.00L1861.71,233.00L1862.58,233.00L1863.45,233.00L1864.32,233.00L1865.19,233.00L1866.06,233.00L1866.93,233.00L1867.80,233.00" fill="none" stroke="#a0a8b0" stroke-width="1" stroke-dasharray="1 2"/><path d="M1790.40,233.00L1791.27,233.00C1791.70,233.00 1791.70,216.20 1792.14,216.20C1792.57,216.20 1792.57,233.00 1793.01,233.00L1793.88,233.00L1794.75,233.00C1795.18,233.00 1795.18,224.60 1795.62,224.60C1796.05,224.60 1796.05,233.00 1796.49,233.00L1797.36,233.00L1798.23,233.00L1799.10,233.00L1799.97,233.00L1800.84,233.00L1801.71,233.00C1802.14,233.00 1802.14,224.60 1802.58,224.60C1803.01,224.60 1803.01,233.00 1803.44,233.00C1803.88,233.00 1803.88,224.60 1804.31,224.60C1804.75,224.60 1804.75,233.00 1805.18,233.00C1805.62,233.00 1805.62,224.60 1806.05,224.60C1806.49,224.60 1806.49,233.00 1806.92,233.00C1807.36,233.00 1807.36,224.60 1807.79,224.60C1808.23,224.60 1808.23,233.00 1808.66,233.00L1809.53,233.00L1810.40,233.00L1811.27,233.00L1812.14,233.00L1813.01,233.00L1813.88,233.00L1814.75,233.00L1815.62,233.00L1816.49,233.00L1817.36,233.00C1817.79,233.00 1817.79,216.20 1818.23,216.20C1818.66,216.20 1818.66,233.00 1819.10,233.00C1819.53,233.00 1819.53,224.60 1819.97,224.60C1820.40,224.60 1820.40,233.00 1820.84,233.00L1821.71,233.00L1822.58,233.00L1823.45,233.00L1824.32,233.00L1825.19,233.00L1826.06,233.00L1826.93,233.00L1827.80,233.00L1828.67,233.00L1829.53,233.00C1829.97,233.00 1829.97,224.60 1830.40,224.60C1830.84,224.60 1830.84,233.00 1831.27,233.00L1832.14,233.00C1832.58,233.00 1832.58,224.60 1833.01,224.60C1833.45,224.60 1833.45,233.00 1833.88,233.00L1834.75,233.00L1835.62,233.00L1836.49,233.00L1837.36,233.00L1838.23,233.00C1838.67,233.00 1838.67,224.60 1839.10,224.60C1839.54,224.60 1839.54,233.00 1839.97,233.00L1840.84,233.00L1841.71,233.00L1842.58,233.00L1843.45,233.00L1844.32,233.00L1845.19,233.00L1846.06,233.00L1846.93,233.00L1847.80,233.00L1848.67,233.00L1849.54,233.00L1850.41,233.00L1851.28,233.00C1851.71,233.00 1851.71,224.60 1852.15,224.60C1852.58,224.60 1852.58,233.00 1853.02,233.00L1853.89,233.00L1854.76,233.00L1855.62,233.00L1856.49,233.00L1857.36,233.00L1858.23,233.00L1859.10,233.00L1859.97,233.00L1860.84,233.00C1861.28,233.00 1861.28,224.60 1861.71,224.60C1862.15,224.60 1862.15,233.00 1862.58,233.00C1863.02,233.00 1863.02,216.20 1863.45,216.20C1863.89,216.20 1863.89,233.00 1864.32,233.00L1865.19,233.00L1866.06,233.00L1866.93,233.00L1867.80,233.00" fill="none" stroke="#3d95c9" stroke-width="1.3" stroke-linejoin="round"/></svg>
<div style="position:absolute;left:1911.20px;top:67.50px;width:6.60px;height:248.20px;background:#b3b3b3;"></div>
<svg style="position:absolute;left:1910px;top:935px" width="9" height="5"><path d="M1.6 0.8 L7.6 0.8 L4.6 4.6 Z" fill="#8a8a8a"/></svg>
<svg style="position:absolute;left:1910px;top:59px" width="9" height="7"><path d="M1.2 5.6 L4.4 1.6 L7.6 5.6 Z" fill="#a3a3a3"/></svg>
</div></body></html>
